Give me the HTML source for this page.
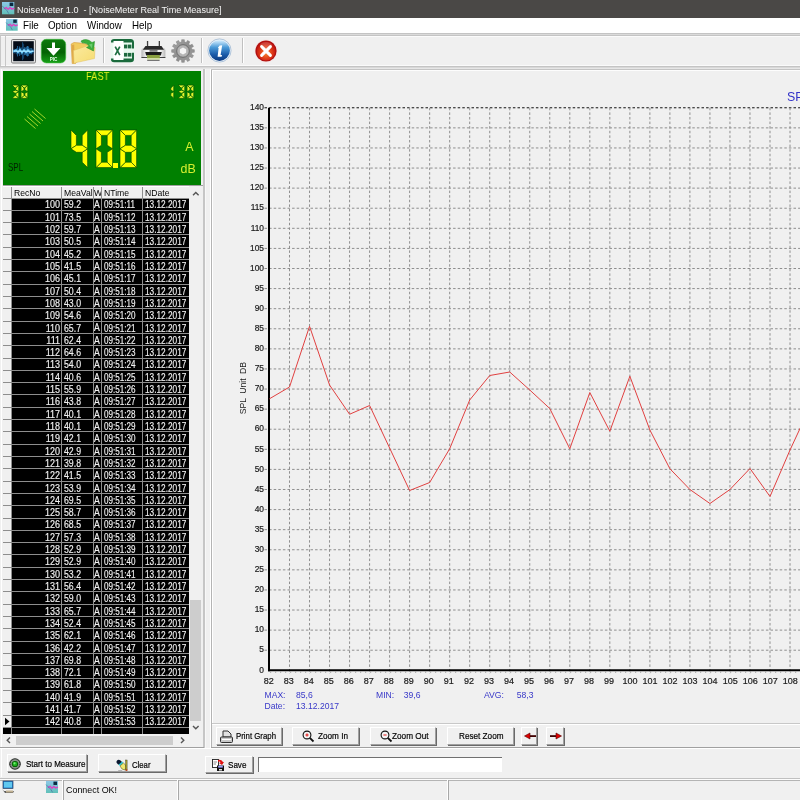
<!DOCTYPE html>
<html><head><meta charset="utf-8">
<style>
*{margin:0;padding:0;box-sizing:border-box}
html,body{width:800px;height:800px;overflow:hidden;background:#f0f0f0;font-family:"Liberation Sans", sans-serif}
.a{position:absolute}
.t{position:absolute;white-space:nowrap;line-height:1}
</style></head><body><div style="position:absolute;left:0;top:0;width:800px;height:800px;will-change:transform">

<div class="a" style="left:0;top:0;width:800px;height:17.5px;background:#4a4846"></div>
<div class="t" style="left:17.3px;top:5px;font-size:9.6px;color:#f6f6f6;transform:scaleX(0.945);transform-origin:0 0">NoiseMeter 1.0&nbsp; - [NoiseMeter Real Time Measure]</div>
<div class="a" style="left:0;top:17.5px;width:800px;height:15.5px;background:#ffffff"></div>
<div class="t" style="left:22.9px;top:21.3px;font-size:10.2px;color:#000;transform:scaleX(0.96);transform-origin:0 0">File</div>
<div class="t" style="left:48px;top:21.3px;font-size:10.2px;color:#000;transform:scaleX(0.96);transform-origin:0 0">Option</div>
<div class="t" style="left:86.6px;top:21.3px;font-size:10.2px;color:#000;transform:scaleX(0.96);transform-origin:0 0">Window</div>
<div class="t" style="left:131.6px;top:21.3px;font-size:10.2px;color:#000;transform:scaleX(0.96);transform-origin:0 0">Help</div>
<div class="a" style="left:0;top:33px;width:800px;height:1px;background:#c4c4c4"></div>
<div class="a" style="left:0;top:34px;width:800px;height:1px;background:#dadada"></div>
<div class="a" style="left:0;top:35px;width:800px;height:1px;background:#c4c4c4"></div>
<div class="a" style="left:0;top:36px;width:800px;height:1px;background:#fbfbfb"></div>
<div class="a" style="left:0;top:65px;width:800px;height:1px;background:#fafafa"></div>
<div class="a" style="left:0;top:66px;width:800px;height:1px;background:#c4c4c4"></div>
<div class="a" style="left:0;top:67px;width:800px;height:1px;background:#d8d8d8"></div>
<div class="a" style="left:0;top:68px;width:800px;height:1px;background:#e6e6e6"></div>
<div class="a" style="left:103.0px;top:38px;width:1px;height:25px;background:#c0c0c0"></div>
<div class="a" style="left:104.0px;top:38px;width:1px;height:25px;background:#ffffff"></div>
<div class="a" style="left:201.0px;top:38px;width:1px;height:25px;background:#c0c0c0"></div>
<div class="a" style="left:202.0px;top:38px;width:1px;height:25px;background:#ffffff"></div>
<div class="a" style="left:242.0px;top:38px;width:1px;height:25px;background:#c0c0c0"></div>
<div class="a" style="left:243.0px;top:38px;width:1px;height:25px;background:#ffffff"></div>
<div class="a" style="left:0;top:36px;width:1px;height:30px;background:#c8c8c8"></div>
<div class="a" style="left:5px;top:36px;width:1px;height:30px;background:#c8c8c8"></div>
<div class="a" style="left:1px;top:69px;width:1px;height:708px;background:#ffffff"></div>
<div class="a" style="left:3px;top:70.8px;width:198px;height:113.8px;background:#008000"></div>
<div class="t" style="left:85.6px;top:71px;font-size:11px;color:#e0f020;transform:scaleX(0.85);transform-origin:0 0">FAST</div>
<div class="t" style="left:8.3px;top:161.6px;font-size:10.8px;color:#002000;transform:scaleX(0.74);transform-origin:0 0">SPL</div>
<div class="t" style="left:185.3px;top:140.8px;font-size:12.4px;color:#d8f030">A</div>
<div class="t" style="left:180.6px;top:163.2px;font-size:12.4px;color:#d8f030">dB</div>
<svg class="a" style="left:70.8px;top:130px;overflow:visible" width="16.6" height="37.6"><polygon points="16.60,0.00 16.60,18.80 11.20,15.30 11.20,5.40" fill="#ffff00" stroke="#004800" stroke-width="0.6" stroke-linejoin="miter"/><polygon points="16.60,18.80 16.60,37.60 11.20,32.20 11.20,22.30" fill="#ffff00" stroke="#004800" stroke-width="0.6" stroke-linejoin="miter"/><polygon points="0.00,0.00 5.40,5.40 5.40,15.30 0.00,18.80" fill="#ffff00" stroke="#004800" stroke-width="0.6" stroke-linejoin="miter"/><polygon points="0.00,18.80 5.40,15.30 11.20,15.30 16.60,18.80 11.20,22.30 5.40,22.30" fill="#ffff00" stroke="#004800" stroke-width="0.6" stroke-linejoin="miter"/></svg>
<svg class="a" style="left:95.8px;top:130px;overflow:visible" width="16.6" height="37.6"><polygon points="0.00,0.00 16.60,0.00 11.20,5.40 5.40,5.40" fill="#ffff00" stroke="#004800" stroke-width="0.6" stroke-linejoin="miter"/><polygon points="16.60,0.00 16.60,18.80 11.20,15.30 11.20,5.40" fill="#ffff00" stroke="#004800" stroke-width="0.6" stroke-linejoin="miter"/><polygon points="16.60,18.80 16.60,37.60 11.20,32.20 11.20,22.30" fill="#ffff00" stroke="#004800" stroke-width="0.6" stroke-linejoin="miter"/><polygon points="0.00,37.60 5.40,32.20 11.20,32.20 16.60,37.60" fill="#ffff00" stroke="#004800" stroke-width="0.6" stroke-linejoin="miter"/><polygon points="0.00,18.80 5.40,22.30 5.40,32.20 0.00,37.60" fill="#ffff00" stroke="#004800" stroke-width="0.6" stroke-linejoin="miter"/><polygon points="0.00,0.00 5.40,5.40 5.40,15.30 0.00,18.80" fill="#ffff00" stroke="#004800" stroke-width="0.6" stroke-linejoin="miter"/></svg>
<div class="a" style="left:113px;top:163px;width:5px;height:5px;background:#ffff00"></div>
<svg class="a" style="left:120.4px;top:130px;overflow:visible" width="16.6" height="37.6"><polygon points="0.00,0.00 16.60,0.00 11.20,5.40 5.40,5.40" fill="#ffff00" stroke="#004800" stroke-width="0.6" stroke-linejoin="miter"/><polygon points="16.60,0.00 16.60,18.80 11.20,15.30 11.20,5.40" fill="#ffff00" stroke="#004800" stroke-width="0.6" stroke-linejoin="miter"/><polygon points="16.60,18.80 16.60,37.60 11.20,32.20 11.20,22.30" fill="#ffff00" stroke="#004800" stroke-width="0.6" stroke-linejoin="miter"/><polygon points="0.00,37.60 5.40,32.20 11.20,32.20 16.60,37.60" fill="#ffff00" stroke="#004800" stroke-width="0.6" stroke-linejoin="miter"/><polygon points="0.00,18.80 5.40,22.30 5.40,32.20 0.00,37.60" fill="#ffff00" stroke="#004800" stroke-width="0.6" stroke-linejoin="miter"/><polygon points="0.00,0.00 5.40,5.40 5.40,15.30 0.00,18.80" fill="#ffff00" stroke="#004800" stroke-width="0.6" stroke-linejoin="miter"/><polygon points="0.00,18.80 5.40,15.30 11.20,15.30 16.60,18.80 11.20,22.30 5.40,22.30" fill="#ffff00" stroke="#004800" stroke-width="0.6" stroke-linejoin="miter"/></svg>
<svg class="a" style="left:11.6px;top:84.7px;overflow:visible" width="6.8" height="13.4"><polygon points="0.00,0.00 6.80,0.00 3.80,3.00 3.00,3.00" fill="#e4f430" stroke="#006000" stroke-width="0.8" stroke-linejoin="miter"/><polygon points="6.80,0.00 6.80,6.70 3.80,5.20 3.80,3.00" fill="#e4f430" stroke="#006000" stroke-width="0.8" stroke-linejoin="miter"/><polygon points="6.80,6.70 6.80,13.40 3.80,10.40 3.80,8.20" fill="#e4f430" stroke="#006000" stroke-width="0.8" stroke-linejoin="miter"/><polygon points="0.00,13.40 3.00,10.40 3.80,10.40 6.80,13.40" fill="#e4f430" stroke="#006000" stroke-width="0.8" stroke-linejoin="miter"/><polygon points="0.00,6.70 3.00,5.20 3.80,5.20 6.80,6.70 3.80,8.20 3.00,8.20" fill="#e4f430" stroke="#006000" stroke-width="0.8" stroke-linejoin="miter"/></svg>
<svg class="a" style="left:21.2px;top:84.7px;overflow:visible" width="6.8" height="13.4"><polygon points="0.00,0.00 6.80,0.00 3.80,3.00 3.00,3.00" fill="#e4f430" stroke="#006000" stroke-width="0.8" stroke-linejoin="miter"/><polygon points="6.80,0.00 6.80,6.70 3.80,5.20 3.80,3.00" fill="#e4f430" stroke="#006000" stroke-width="0.8" stroke-linejoin="miter"/><polygon points="6.80,6.70 6.80,13.40 3.80,10.40 3.80,8.20" fill="#e4f430" stroke="#006000" stroke-width="0.8" stroke-linejoin="miter"/><polygon points="0.00,13.40 3.00,10.40 3.80,10.40 6.80,13.40" fill="#e4f430" stroke="#006000" stroke-width="0.8" stroke-linejoin="miter"/><polygon points="0.00,6.70 3.00,8.20 3.00,10.40 0.00,13.40" fill="#e4f430" stroke="#006000" stroke-width="0.8" stroke-linejoin="miter"/><polygon points="0.00,0.00 3.00,3.00 3.00,5.20 0.00,6.70" fill="#e4f430" stroke="#006000" stroke-width="0.8" stroke-linejoin="miter"/></svg>
<svg class="a" style="left:167.2px;top:84.7px;overflow:visible" width="6.8" height="13.4"><polygon points="6.80,0.00 6.80,6.70 3.80,5.20 3.80,3.00" fill="#e4f430" stroke="#006000" stroke-width="0.8" stroke-linejoin="miter"/><polygon points="6.80,6.70 6.80,13.40 3.80,10.40 3.80,8.20" fill="#e4f430" stroke="#006000" stroke-width="0.8" stroke-linejoin="miter"/></svg>
<svg class="a" style="left:177.6px;top:84.7px;overflow:visible" width="6.8" height="13.4"><polygon points="0.00,0.00 6.80,0.00 3.80,3.00 3.00,3.00" fill="#e4f430" stroke="#006000" stroke-width="0.8" stroke-linejoin="miter"/><polygon points="6.80,0.00 6.80,6.70 3.80,5.20 3.80,3.00" fill="#e4f430" stroke="#006000" stroke-width="0.8" stroke-linejoin="miter"/><polygon points="6.80,6.70 6.80,13.40 3.80,10.40 3.80,8.20" fill="#e4f430" stroke="#006000" stroke-width="0.8" stroke-linejoin="miter"/><polygon points="0.00,13.40 3.00,10.40 3.80,10.40 6.80,13.40" fill="#e4f430" stroke="#006000" stroke-width="0.8" stroke-linejoin="miter"/><polygon points="0.00,6.70 3.00,5.20 3.80,5.20 6.80,6.70 3.80,8.20 3.00,8.20" fill="#e4f430" stroke="#006000" stroke-width="0.8" stroke-linejoin="miter"/></svg>
<svg class="a" style="left:186.8px;top:84.7px;overflow:visible" width="6.8" height="13.4"><polygon points="0.00,0.00 6.80,0.00 3.80,3.00 3.00,3.00" fill="#e4f430" stroke="#006000" stroke-width="0.8" stroke-linejoin="miter"/><polygon points="6.80,0.00 6.80,6.70 3.80,5.20 3.80,3.00" fill="#e4f430" stroke="#006000" stroke-width="0.8" stroke-linejoin="miter"/><polygon points="6.80,6.70 6.80,13.40 3.80,10.40 3.80,8.20" fill="#e4f430" stroke="#006000" stroke-width="0.8" stroke-linejoin="miter"/><polygon points="0.00,13.40 3.00,10.40 3.80,10.40 6.80,13.40" fill="#e4f430" stroke="#006000" stroke-width="0.8" stroke-linejoin="miter"/><polygon points="0.00,6.70 3.00,8.20 3.00,10.40 0.00,13.40" fill="#e4f430" stroke="#006000" stroke-width="0.8" stroke-linejoin="miter"/><polygon points="0.00,0.00 3.00,3.00 3.00,5.20 0.00,6.70" fill="#e4f430" stroke="#006000" stroke-width="0.8" stroke-linejoin="miter"/></svg>
<svg class="a" style="left:0;top:0" width="60" height="140"><line x1="24.50" y1="119.00" x2="35.50" y2="128.50" stroke="#b8e030" stroke-width="0.9"/><line x1="27.00" y1="116.50" x2="38.00" y2="126.00" stroke="#b8e030" stroke-width="0.9"/><line x1="29.50" y1="114.00" x2="40.50" y2="123.50" stroke="#b8e030" stroke-width="0.9"/><line x1="32.00" y1="111.50" x2="43.00" y2="121.00" stroke="#b8e030" stroke-width="0.9"/><line x1="34.50" y1="109.00" x2="45.50" y2="118.50" stroke="#b8e030" stroke-width="0.9"/></svg>
<div class="a" style="left:3px;top:198px;width:200px;height:548px;background:#000"></div>
<div class="a" style="left:3px;top:184.6px;width:200px;height:1px;background:#a0a0a0"></div>
<div class="a" style="left:3px;top:185.5px;width:186px;height:12.5px;background:#f0f0f0"></div>
<div class="a" style="left:3px;top:198px;width:8.8px;height:530px;background:#f0f0f0"></div>
<div class="a" style="left:189px;top:185.5px;width:14px;height:548.5px;background:#f0f0f0"></div>
<div class="a" style="left:190px;top:600px;width:11px;height:120.5px;background:#cdcdcd"></div>
<div class="a" style="left:3px;top:734px;width:200px;height:12.3px;background:#f0f0f0"></div>
<div class="a" style="left:16px;top:735.5px;width:156.5px;height:9.5px;background:#cdcdcd"></div>
<svg class="a" style="left:0;top:0" width="205" height="750"><g fill="none" stroke="#555" stroke-width="1.4"><polyline points="193,195.2 195.8,192.4 198.6,195.2"/><polyline points="193,726 195.8,728.8 198.6,726"/><polyline points="10,737.5 7.2,740.3 10,743.1"/><polyline points="181,737.5 183.8,740.3 181,743.1"/></g></svg>
<div class="t" style="left:13.5px;top:188.2px;font-size:9.6px;color:#000;transform:scaleX(0.9);transform-origin:0 0">RecNo</div>
<div class="t" style="left:63.5px;top:188.2px;font-size:9.6px;color:#000;transform:scaleX(0.9);transform-origin:0 0">MeaVal</div>
<div class="a" style="left:93.5px;top:186px;width:8px;height:12px;overflow:hidden"><div class="t" style="left:0;top:2.2px;font-size:9.6px;color:#000;transform:scaleX(0.9);transform-origin:0 0">W</div></div>
<div class="t" style="left:103.5px;top:188.2px;font-size:9.6px;color:#000;transform:scaleX(0.9);transform-origin:0 0">NTime</div>
<div class="t" style="left:144.5px;top:188.2px;font-size:9.6px;color:#000;transform:scaleX(0.9);transform-origin:0 0">NDate</div>
<div class="t" style="left:37.5px;width:22px;text-align:right;top:200.40px;font-size:10px;color:#f2f2f2;-webkit-text-stroke:0.15px #f2f2f2;transform:scaleX(0.9);transform-origin:100% 0">100</div><div class="t" style="left:63.8px;top:200.40px;font-size:10px;color:#f2f2f2;-webkit-text-stroke:0.15px #f2f2f2;transform:scaleX(0.874);transform-origin:0 0">59.2</div><div class="a" style="left:93.6px;top:198.30px;width:7.6px;height:12px;overflow:hidden"><div class="t" style="left:0.6px;top:2.1px;font-size:10px;color:#f2f2f2;-webkit-text-stroke:0.15px #f2f2f2;transform:scaleX(0.87);transform-origin:0 0">A</div></div><div class="t" style="left:103.6px;top:200.40px;font-size:10px;color:#f2f2f2;-webkit-text-stroke:0.15px #f2f2f2;transform:scaleX(0.81);transform-origin:0 0">09:51:11</div><div class="t" style="left:144.8px;top:200.40px;font-size:10px;color:#f2f2f2;-webkit-text-stroke:0.15px #f2f2f2;transform:scaleX(0.826);transform-origin:0 0">13.12.2017</div><div class="a" style="left:3px;top:210px;width:186px;height:1px;background:#8e8e8e"></div><div class="t" style="left:37.5px;width:22px;text-align:right;top:212.71px;font-size:10px;color:#f2f2f2;-webkit-text-stroke:0.15px #f2f2f2;transform:scaleX(0.9);transform-origin:100% 0">101</div><div class="t" style="left:63.8px;top:212.71px;font-size:10px;color:#f2f2f2;-webkit-text-stroke:0.15px #f2f2f2;transform:scaleX(0.874);transform-origin:0 0">73.5</div><div class="a" style="left:93.6px;top:210.61px;width:7.6px;height:12px;overflow:hidden"><div class="t" style="left:0.6px;top:2.1px;font-size:10px;color:#f2f2f2;-webkit-text-stroke:0.15px #f2f2f2;transform:scaleX(0.87);transform-origin:0 0">A</div></div><div class="t" style="left:103.6px;top:212.71px;font-size:10px;color:#f2f2f2;-webkit-text-stroke:0.15px #f2f2f2;transform:scaleX(0.81);transform-origin:0 0">09:51:12</div><div class="t" style="left:144.8px;top:212.71px;font-size:10px;color:#f2f2f2;-webkit-text-stroke:0.15px #f2f2f2;transform:scaleX(0.826);transform-origin:0 0">13.12.2017</div><div class="a" style="left:3px;top:222px;width:186px;height:1px;background:#8e8e8e"></div><div class="t" style="left:37.5px;width:22px;text-align:right;top:225.02px;font-size:10px;color:#f2f2f2;-webkit-text-stroke:0.15px #f2f2f2;transform:scaleX(0.9);transform-origin:100% 0">102</div><div class="t" style="left:63.8px;top:225.02px;font-size:10px;color:#f2f2f2;-webkit-text-stroke:0.15px #f2f2f2;transform:scaleX(0.874);transform-origin:0 0">59.7</div><div class="a" style="left:93.6px;top:222.92px;width:7.6px;height:12px;overflow:hidden"><div class="t" style="left:0.6px;top:2.1px;font-size:10px;color:#f2f2f2;-webkit-text-stroke:0.15px #f2f2f2;transform:scaleX(0.87);transform-origin:0 0">A</div></div><div class="t" style="left:103.6px;top:225.02px;font-size:10px;color:#f2f2f2;-webkit-text-stroke:0.15px #f2f2f2;transform:scaleX(0.81);transform-origin:0 0">09:51:13</div><div class="t" style="left:144.8px;top:225.02px;font-size:10px;color:#f2f2f2;-webkit-text-stroke:0.15px #f2f2f2;transform:scaleX(0.826);transform-origin:0 0">13.12.2017</div><div class="a" style="left:3px;top:234px;width:186px;height:1px;background:#8e8e8e"></div><div class="t" style="left:37.5px;width:22px;text-align:right;top:237.33px;font-size:10px;color:#f2f2f2;-webkit-text-stroke:0.15px #f2f2f2;transform:scaleX(0.9);transform-origin:100% 0">103</div><div class="t" style="left:63.8px;top:237.33px;font-size:10px;color:#f2f2f2;-webkit-text-stroke:0.15px #f2f2f2;transform:scaleX(0.874);transform-origin:0 0">50.5</div><div class="a" style="left:93.6px;top:235.23px;width:7.6px;height:12px;overflow:hidden"><div class="t" style="left:0.6px;top:2.1px;font-size:10px;color:#f2f2f2;-webkit-text-stroke:0.15px #f2f2f2;transform:scaleX(0.87);transform-origin:0 0">A</div></div><div class="t" style="left:103.6px;top:237.33px;font-size:10px;color:#f2f2f2;-webkit-text-stroke:0.15px #f2f2f2;transform:scaleX(0.81);transform-origin:0 0">09:51:14</div><div class="t" style="left:144.8px;top:237.33px;font-size:10px;color:#f2f2f2;-webkit-text-stroke:0.15px #f2f2f2;transform:scaleX(0.826);transform-origin:0 0">13.12.2017</div><div class="a" style="left:3px;top:247px;width:186px;height:1px;background:#8e8e8e"></div><div class="t" style="left:37.5px;width:22px;text-align:right;top:249.64px;font-size:10px;color:#f2f2f2;-webkit-text-stroke:0.15px #f2f2f2;transform:scaleX(0.9);transform-origin:100% 0">104</div><div class="t" style="left:63.8px;top:249.64px;font-size:10px;color:#f2f2f2;-webkit-text-stroke:0.15px #f2f2f2;transform:scaleX(0.874);transform-origin:0 0">45.2</div><div class="a" style="left:93.6px;top:247.54px;width:7.6px;height:12px;overflow:hidden"><div class="t" style="left:0.6px;top:2.1px;font-size:10px;color:#f2f2f2;-webkit-text-stroke:0.15px #f2f2f2;transform:scaleX(0.87);transform-origin:0 0">A</div></div><div class="t" style="left:103.6px;top:249.64px;font-size:10px;color:#f2f2f2;-webkit-text-stroke:0.15px #f2f2f2;transform:scaleX(0.81);transform-origin:0 0">09:51:15</div><div class="t" style="left:144.8px;top:249.64px;font-size:10px;color:#f2f2f2;-webkit-text-stroke:0.15px #f2f2f2;transform:scaleX(0.826);transform-origin:0 0">13.12.2017</div><div class="a" style="left:3px;top:259px;width:186px;height:1px;background:#8e8e8e"></div><div class="t" style="left:37.5px;width:22px;text-align:right;top:261.95px;font-size:10px;color:#f2f2f2;-webkit-text-stroke:0.15px #f2f2f2;transform:scaleX(0.9);transform-origin:100% 0">105</div><div class="t" style="left:63.8px;top:261.95px;font-size:10px;color:#f2f2f2;-webkit-text-stroke:0.15px #f2f2f2;transform:scaleX(0.874);transform-origin:0 0">41.5</div><div class="a" style="left:93.6px;top:259.85px;width:7.6px;height:12px;overflow:hidden"><div class="t" style="left:0.6px;top:2.1px;font-size:10px;color:#f2f2f2;-webkit-text-stroke:0.15px #f2f2f2;transform:scaleX(0.87);transform-origin:0 0">A</div></div><div class="t" style="left:103.6px;top:261.95px;font-size:10px;color:#f2f2f2;-webkit-text-stroke:0.15px #f2f2f2;transform:scaleX(0.81);transform-origin:0 0">09:51:16</div><div class="t" style="left:144.8px;top:261.95px;font-size:10px;color:#f2f2f2;-webkit-text-stroke:0.15px #f2f2f2;transform:scaleX(0.826);transform-origin:0 0">13.12.2017</div><div class="a" style="left:3px;top:271px;width:186px;height:1px;background:#8e8e8e"></div><div class="t" style="left:37.5px;width:22px;text-align:right;top:274.26px;font-size:10px;color:#f2f2f2;-webkit-text-stroke:0.15px #f2f2f2;transform:scaleX(0.9);transform-origin:100% 0">106</div><div class="t" style="left:63.8px;top:274.26px;font-size:10px;color:#f2f2f2;-webkit-text-stroke:0.15px #f2f2f2;transform:scaleX(0.874);transform-origin:0 0">45.1</div><div class="a" style="left:93.6px;top:272.16px;width:7.6px;height:12px;overflow:hidden"><div class="t" style="left:0.6px;top:2.1px;font-size:10px;color:#f2f2f2;-webkit-text-stroke:0.15px #f2f2f2;transform:scaleX(0.87);transform-origin:0 0">A</div></div><div class="t" style="left:103.6px;top:274.26px;font-size:10px;color:#f2f2f2;-webkit-text-stroke:0.15px #f2f2f2;transform:scaleX(0.81);transform-origin:0 0">09:51:17</div><div class="t" style="left:144.8px;top:274.26px;font-size:10px;color:#f2f2f2;-webkit-text-stroke:0.15px #f2f2f2;transform:scaleX(0.826);transform-origin:0 0">13.12.2017</div><div class="a" style="left:3px;top:284px;width:186px;height:1px;background:#8e8e8e"></div><div class="t" style="left:37.5px;width:22px;text-align:right;top:286.57px;font-size:10px;color:#f2f2f2;-webkit-text-stroke:0.15px #f2f2f2;transform:scaleX(0.9);transform-origin:100% 0">107</div><div class="t" style="left:63.8px;top:286.57px;font-size:10px;color:#f2f2f2;-webkit-text-stroke:0.15px #f2f2f2;transform:scaleX(0.874);transform-origin:0 0">50.4</div><div class="a" style="left:93.6px;top:284.47px;width:7.6px;height:12px;overflow:hidden"><div class="t" style="left:0.6px;top:2.1px;font-size:10px;color:#f2f2f2;-webkit-text-stroke:0.15px #f2f2f2;transform:scaleX(0.87);transform-origin:0 0">A</div></div><div class="t" style="left:103.6px;top:286.57px;font-size:10px;color:#f2f2f2;-webkit-text-stroke:0.15px #f2f2f2;transform:scaleX(0.81);transform-origin:0 0">09:51:18</div><div class="t" style="left:144.8px;top:286.57px;font-size:10px;color:#f2f2f2;-webkit-text-stroke:0.15px #f2f2f2;transform:scaleX(0.826);transform-origin:0 0">13.12.2017</div><div class="a" style="left:3px;top:296px;width:186px;height:1px;background:#8e8e8e"></div><div class="t" style="left:37.5px;width:22px;text-align:right;top:298.88px;font-size:10px;color:#f2f2f2;-webkit-text-stroke:0.15px #f2f2f2;transform:scaleX(0.9);transform-origin:100% 0">108</div><div class="t" style="left:63.8px;top:298.88px;font-size:10px;color:#f2f2f2;-webkit-text-stroke:0.15px #f2f2f2;transform:scaleX(0.874);transform-origin:0 0">43.0</div><div class="a" style="left:93.6px;top:296.78px;width:7.6px;height:12px;overflow:hidden"><div class="t" style="left:0.6px;top:2.1px;font-size:10px;color:#f2f2f2;-webkit-text-stroke:0.15px #f2f2f2;transform:scaleX(0.87);transform-origin:0 0">A</div></div><div class="t" style="left:103.6px;top:298.88px;font-size:10px;color:#f2f2f2;-webkit-text-stroke:0.15px #f2f2f2;transform:scaleX(0.81);transform-origin:0 0">09:51:19</div><div class="t" style="left:144.8px;top:298.88px;font-size:10px;color:#f2f2f2;-webkit-text-stroke:0.15px #f2f2f2;transform:scaleX(0.826);transform-origin:0 0">13.12.2017</div><div class="a" style="left:3px;top:308px;width:186px;height:1px;background:#8e8e8e"></div><div class="t" style="left:37.5px;width:22px;text-align:right;top:311.19px;font-size:10px;color:#f2f2f2;-webkit-text-stroke:0.15px #f2f2f2;transform:scaleX(0.9);transform-origin:100% 0">109</div><div class="t" style="left:63.8px;top:311.19px;font-size:10px;color:#f2f2f2;-webkit-text-stroke:0.15px #f2f2f2;transform:scaleX(0.874);transform-origin:0 0">54.6</div><div class="a" style="left:93.6px;top:309.09px;width:7.6px;height:12px;overflow:hidden"><div class="t" style="left:0.6px;top:2.1px;font-size:10px;color:#f2f2f2;-webkit-text-stroke:0.15px #f2f2f2;transform:scaleX(0.87);transform-origin:0 0">A</div></div><div class="t" style="left:103.6px;top:311.19px;font-size:10px;color:#f2f2f2;-webkit-text-stroke:0.15px #f2f2f2;transform:scaleX(0.81);transform-origin:0 0">09:51:20</div><div class="t" style="left:144.8px;top:311.19px;font-size:10px;color:#f2f2f2;-webkit-text-stroke:0.15px #f2f2f2;transform:scaleX(0.826);transform-origin:0 0">13.12.2017</div><div class="a" style="left:3px;top:321px;width:186px;height:1px;background:#8e8e8e"></div><div class="t" style="left:37.5px;width:22px;text-align:right;top:323.50px;font-size:10px;color:#f2f2f2;-webkit-text-stroke:0.15px #f2f2f2;transform:scaleX(0.9);transform-origin:100% 0">110</div><div class="t" style="left:63.8px;top:323.50px;font-size:10px;color:#f2f2f2;-webkit-text-stroke:0.15px #f2f2f2;transform:scaleX(0.874);transform-origin:0 0">65.7</div><div class="a" style="left:93.6px;top:321.40px;width:7.6px;height:12px;overflow:hidden"><div class="t" style="left:0.6px;top:2.1px;font-size:10px;color:#f2f2f2;-webkit-text-stroke:0.15px #f2f2f2;transform:scaleX(0.87);transform-origin:0 0">A</div></div><div class="t" style="left:103.6px;top:323.50px;font-size:10px;color:#f2f2f2;-webkit-text-stroke:0.15px #f2f2f2;transform:scaleX(0.81);transform-origin:0 0">09:51:21</div><div class="t" style="left:144.8px;top:323.50px;font-size:10px;color:#f2f2f2;-webkit-text-stroke:0.15px #f2f2f2;transform:scaleX(0.826);transform-origin:0 0">13.12.2017</div><div class="a" style="left:3px;top:333px;width:186px;height:1px;background:#8e8e8e"></div><div class="t" style="left:37.5px;width:22px;text-align:right;top:335.81px;font-size:10px;color:#f2f2f2;-webkit-text-stroke:0.15px #f2f2f2;transform:scaleX(0.9);transform-origin:100% 0">111</div><div class="t" style="left:63.8px;top:335.81px;font-size:10px;color:#f2f2f2;-webkit-text-stroke:0.15px #f2f2f2;transform:scaleX(0.874);transform-origin:0 0">62.4</div><div class="a" style="left:93.6px;top:333.71px;width:7.6px;height:12px;overflow:hidden"><div class="t" style="left:0.6px;top:2.1px;font-size:10px;color:#f2f2f2;-webkit-text-stroke:0.15px #f2f2f2;transform:scaleX(0.87);transform-origin:0 0">A</div></div><div class="t" style="left:103.6px;top:335.81px;font-size:10px;color:#f2f2f2;-webkit-text-stroke:0.15px #f2f2f2;transform:scaleX(0.81);transform-origin:0 0">09:51:22</div><div class="t" style="left:144.8px;top:335.81px;font-size:10px;color:#f2f2f2;-webkit-text-stroke:0.15px #f2f2f2;transform:scaleX(0.826);transform-origin:0 0">13.12.2017</div><div class="a" style="left:3px;top:345px;width:186px;height:1px;background:#8e8e8e"></div><div class="t" style="left:37.5px;width:22px;text-align:right;top:348.12px;font-size:10px;color:#f2f2f2;-webkit-text-stroke:0.15px #f2f2f2;transform:scaleX(0.9);transform-origin:100% 0">112</div><div class="t" style="left:63.8px;top:348.12px;font-size:10px;color:#f2f2f2;-webkit-text-stroke:0.15px #f2f2f2;transform:scaleX(0.874);transform-origin:0 0">64.6</div><div class="a" style="left:93.6px;top:346.02px;width:7.6px;height:12px;overflow:hidden"><div class="t" style="left:0.6px;top:2.1px;font-size:10px;color:#f2f2f2;-webkit-text-stroke:0.15px #f2f2f2;transform:scaleX(0.87);transform-origin:0 0">A</div></div><div class="t" style="left:103.6px;top:348.12px;font-size:10px;color:#f2f2f2;-webkit-text-stroke:0.15px #f2f2f2;transform:scaleX(0.81);transform-origin:0 0">09:51:23</div><div class="t" style="left:144.8px;top:348.12px;font-size:10px;color:#f2f2f2;-webkit-text-stroke:0.15px #f2f2f2;transform:scaleX(0.826);transform-origin:0 0">13.12.2017</div><div class="a" style="left:3px;top:358px;width:186px;height:1px;background:#8e8e8e"></div><div class="t" style="left:37.5px;width:22px;text-align:right;top:360.43px;font-size:10px;color:#f2f2f2;-webkit-text-stroke:0.15px #f2f2f2;transform:scaleX(0.9);transform-origin:100% 0">113</div><div class="t" style="left:63.8px;top:360.43px;font-size:10px;color:#f2f2f2;-webkit-text-stroke:0.15px #f2f2f2;transform:scaleX(0.874);transform-origin:0 0">54.0</div><div class="a" style="left:93.6px;top:358.33px;width:7.6px;height:12px;overflow:hidden"><div class="t" style="left:0.6px;top:2.1px;font-size:10px;color:#f2f2f2;-webkit-text-stroke:0.15px #f2f2f2;transform:scaleX(0.87);transform-origin:0 0">A</div></div><div class="t" style="left:103.6px;top:360.43px;font-size:10px;color:#f2f2f2;-webkit-text-stroke:0.15px #f2f2f2;transform:scaleX(0.81);transform-origin:0 0">09:51:24</div><div class="t" style="left:144.8px;top:360.43px;font-size:10px;color:#f2f2f2;-webkit-text-stroke:0.15px #f2f2f2;transform:scaleX(0.826);transform-origin:0 0">13.12.2017</div><div class="a" style="left:3px;top:370px;width:186px;height:1px;background:#8e8e8e"></div><div class="t" style="left:37.5px;width:22px;text-align:right;top:372.74px;font-size:10px;color:#f2f2f2;-webkit-text-stroke:0.15px #f2f2f2;transform:scaleX(0.9);transform-origin:100% 0">114</div><div class="t" style="left:63.8px;top:372.74px;font-size:10px;color:#f2f2f2;-webkit-text-stroke:0.15px #f2f2f2;transform:scaleX(0.874);transform-origin:0 0">40.6</div><div class="a" style="left:93.6px;top:370.64px;width:7.6px;height:12px;overflow:hidden"><div class="t" style="left:0.6px;top:2.1px;font-size:10px;color:#f2f2f2;-webkit-text-stroke:0.15px #f2f2f2;transform:scaleX(0.87);transform-origin:0 0">A</div></div><div class="t" style="left:103.6px;top:372.74px;font-size:10px;color:#f2f2f2;-webkit-text-stroke:0.15px #f2f2f2;transform:scaleX(0.81);transform-origin:0 0">09:51:25</div><div class="t" style="left:144.8px;top:372.74px;font-size:10px;color:#f2f2f2;-webkit-text-stroke:0.15px #f2f2f2;transform:scaleX(0.826);transform-origin:0 0">13.12.2017</div><div class="a" style="left:3px;top:382px;width:186px;height:1px;background:#8e8e8e"></div><div class="t" style="left:37.5px;width:22px;text-align:right;top:385.05px;font-size:10px;color:#f2f2f2;-webkit-text-stroke:0.15px #f2f2f2;transform:scaleX(0.9);transform-origin:100% 0">115</div><div class="t" style="left:63.8px;top:385.05px;font-size:10px;color:#f2f2f2;-webkit-text-stroke:0.15px #f2f2f2;transform:scaleX(0.874);transform-origin:0 0">55.9</div><div class="a" style="left:93.6px;top:382.95px;width:7.6px;height:12px;overflow:hidden"><div class="t" style="left:0.6px;top:2.1px;font-size:10px;color:#f2f2f2;-webkit-text-stroke:0.15px #f2f2f2;transform:scaleX(0.87);transform-origin:0 0">A</div></div><div class="t" style="left:103.6px;top:385.05px;font-size:10px;color:#f2f2f2;-webkit-text-stroke:0.15px #f2f2f2;transform:scaleX(0.81);transform-origin:0 0">09:51:26</div><div class="t" style="left:144.8px;top:385.05px;font-size:10px;color:#f2f2f2;-webkit-text-stroke:0.15px #f2f2f2;transform:scaleX(0.826);transform-origin:0 0">13.12.2017</div><div class="a" style="left:3px;top:394px;width:186px;height:1px;background:#8e8e8e"></div><div class="t" style="left:37.5px;width:22px;text-align:right;top:397.36px;font-size:10px;color:#f2f2f2;-webkit-text-stroke:0.15px #f2f2f2;transform:scaleX(0.9);transform-origin:100% 0">116</div><div class="t" style="left:63.8px;top:397.36px;font-size:10px;color:#f2f2f2;-webkit-text-stroke:0.15px #f2f2f2;transform:scaleX(0.874);transform-origin:0 0">43.8</div><div class="a" style="left:93.6px;top:395.26px;width:7.6px;height:12px;overflow:hidden"><div class="t" style="left:0.6px;top:2.1px;font-size:10px;color:#f2f2f2;-webkit-text-stroke:0.15px #f2f2f2;transform:scaleX(0.87);transform-origin:0 0">A</div></div><div class="t" style="left:103.6px;top:397.36px;font-size:10px;color:#f2f2f2;-webkit-text-stroke:0.15px #f2f2f2;transform:scaleX(0.81);transform-origin:0 0">09:51:27</div><div class="t" style="left:144.8px;top:397.36px;font-size:10px;color:#f2f2f2;-webkit-text-stroke:0.15px #f2f2f2;transform:scaleX(0.826);transform-origin:0 0">13.12.2017</div><div class="a" style="left:3px;top:407px;width:186px;height:1px;background:#8e8e8e"></div><div class="t" style="left:37.5px;width:22px;text-align:right;top:409.67px;font-size:10px;color:#f2f2f2;-webkit-text-stroke:0.15px #f2f2f2;transform:scaleX(0.9);transform-origin:100% 0">117</div><div class="t" style="left:63.8px;top:409.67px;font-size:10px;color:#f2f2f2;-webkit-text-stroke:0.15px #f2f2f2;transform:scaleX(0.874);transform-origin:0 0">40.1</div><div class="a" style="left:93.6px;top:407.57px;width:7.6px;height:12px;overflow:hidden"><div class="t" style="left:0.6px;top:2.1px;font-size:10px;color:#f2f2f2;-webkit-text-stroke:0.15px #f2f2f2;transform:scaleX(0.87);transform-origin:0 0">A</div></div><div class="t" style="left:103.6px;top:409.67px;font-size:10px;color:#f2f2f2;-webkit-text-stroke:0.15px #f2f2f2;transform:scaleX(0.81);transform-origin:0 0">09:51:28</div><div class="t" style="left:144.8px;top:409.67px;font-size:10px;color:#f2f2f2;-webkit-text-stroke:0.15px #f2f2f2;transform:scaleX(0.826);transform-origin:0 0">13.12.2017</div><div class="a" style="left:3px;top:419px;width:186px;height:1px;background:#8e8e8e"></div><div class="t" style="left:37.5px;width:22px;text-align:right;top:421.98px;font-size:10px;color:#f2f2f2;-webkit-text-stroke:0.15px #f2f2f2;transform:scaleX(0.9);transform-origin:100% 0">118</div><div class="t" style="left:63.8px;top:421.98px;font-size:10px;color:#f2f2f2;-webkit-text-stroke:0.15px #f2f2f2;transform:scaleX(0.874);transform-origin:0 0">40.1</div><div class="a" style="left:93.6px;top:419.88px;width:7.6px;height:12px;overflow:hidden"><div class="t" style="left:0.6px;top:2.1px;font-size:10px;color:#f2f2f2;-webkit-text-stroke:0.15px #f2f2f2;transform:scaleX(0.87);transform-origin:0 0">A</div></div><div class="t" style="left:103.6px;top:421.98px;font-size:10px;color:#f2f2f2;-webkit-text-stroke:0.15px #f2f2f2;transform:scaleX(0.81);transform-origin:0 0">09:51:29</div><div class="t" style="left:144.8px;top:421.98px;font-size:10px;color:#f2f2f2;-webkit-text-stroke:0.15px #f2f2f2;transform:scaleX(0.826);transform-origin:0 0">13.12.2017</div><div class="a" style="left:3px;top:431px;width:186px;height:1px;background:#8e8e8e"></div><div class="t" style="left:37.5px;width:22px;text-align:right;top:434.29px;font-size:10px;color:#f2f2f2;-webkit-text-stroke:0.15px #f2f2f2;transform:scaleX(0.9);transform-origin:100% 0">119</div><div class="t" style="left:63.8px;top:434.29px;font-size:10px;color:#f2f2f2;-webkit-text-stroke:0.15px #f2f2f2;transform:scaleX(0.874);transform-origin:0 0">42.1</div><div class="a" style="left:93.6px;top:432.19px;width:7.6px;height:12px;overflow:hidden"><div class="t" style="left:0.6px;top:2.1px;font-size:10px;color:#f2f2f2;-webkit-text-stroke:0.15px #f2f2f2;transform:scaleX(0.87);transform-origin:0 0">A</div></div><div class="t" style="left:103.6px;top:434.29px;font-size:10px;color:#f2f2f2;-webkit-text-stroke:0.15px #f2f2f2;transform:scaleX(0.81);transform-origin:0 0">09:51:30</div><div class="t" style="left:144.8px;top:434.29px;font-size:10px;color:#f2f2f2;-webkit-text-stroke:0.15px #f2f2f2;transform:scaleX(0.826);transform-origin:0 0">13.12.2017</div><div class="a" style="left:3px;top:444px;width:186px;height:1px;background:#8e8e8e"></div><div class="t" style="left:37.5px;width:22px;text-align:right;top:446.60px;font-size:10px;color:#f2f2f2;-webkit-text-stroke:0.15px #f2f2f2;transform:scaleX(0.9);transform-origin:100% 0">120</div><div class="t" style="left:63.8px;top:446.60px;font-size:10px;color:#f2f2f2;-webkit-text-stroke:0.15px #f2f2f2;transform:scaleX(0.874);transform-origin:0 0">42.9</div><div class="a" style="left:93.6px;top:444.50px;width:7.6px;height:12px;overflow:hidden"><div class="t" style="left:0.6px;top:2.1px;font-size:10px;color:#f2f2f2;-webkit-text-stroke:0.15px #f2f2f2;transform:scaleX(0.87);transform-origin:0 0">A</div></div><div class="t" style="left:103.6px;top:446.60px;font-size:10px;color:#f2f2f2;-webkit-text-stroke:0.15px #f2f2f2;transform:scaleX(0.81);transform-origin:0 0">09:51:31</div><div class="t" style="left:144.8px;top:446.60px;font-size:10px;color:#f2f2f2;-webkit-text-stroke:0.15px #f2f2f2;transform:scaleX(0.826);transform-origin:0 0">13.12.2017</div><div class="a" style="left:3px;top:456px;width:186px;height:1px;background:#8e8e8e"></div><div class="t" style="left:37.5px;width:22px;text-align:right;top:458.91px;font-size:10px;color:#f2f2f2;-webkit-text-stroke:0.15px #f2f2f2;transform:scaleX(0.9);transform-origin:100% 0">121</div><div class="t" style="left:63.8px;top:458.91px;font-size:10px;color:#f2f2f2;-webkit-text-stroke:0.15px #f2f2f2;transform:scaleX(0.874);transform-origin:0 0">39.8</div><div class="a" style="left:93.6px;top:456.81px;width:7.6px;height:12px;overflow:hidden"><div class="t" style="left:0.6px;top:2.1px;font-size:10px;color:#f2f2f2;-webkit-text-stroke:0.15px #f2f2f2;transform:scaleX(0.87);transform-origin:0 0">A</div></div><div class="t" style="left:103.6px;top:458.91px;font-size:10px;color:#f2f2f2;-webkit-text-stroke:0.15px #f2f2f2;transform:scaleX(0.81);transform-origin:0 0">09:51:32</div><div class="t" style="left:144.8px;top:458.91px;font-size:10px;color:#f2f2f2;-webkit-text-stroke:0.15px #f2f2f2;transform:scaleX(0.826);transform-origin:0 0">13.12.2017</div><div class="a" style="left:3px;top:468px;width:186px;height:1px;background:#8e8e8e"></div><div class="t" style="left:37.5px;width:22px;text-align:right;top:471.22px;font-size:10px;color:#f2f2f2;-webkit-text-stroke:0.15px #f2f2f2;transform:scaleX(0.9);transform-origin:100% 0">122</div><div class="t" style="left:63.8px;top:471.22px;font-size:10px;color:#f2f2f2;-webkit-text-stroke:0.15px #f2f2f2;transform:scaleX(0.874);transform-origin:0 0">41.5</div><div class="a" style="left:93.6px;top:469.12px;width:7.6px;height:12px;overflow:hidden"><div class="t" style="left:0.6px;top:2.1px;font-size:10px;color:#f2f2f2;-webkit-text-stroke:0.15px #f2f2f2;transform:scaleX(0.87);transform-origin:0 0">A</div></div><div class="t" style="left:103.6px;top:471.22px;font-size:10px;color:#f2f2f2;-webkit-text-stroke:0.15px #f2f2f2;transform:scaleX(0.81);transform-origin:0 0">09:51:33</div><div class="t" style="left:144.8px;top:471.22px;font-size:10px;color:#f2f2f2;-webkit-text-stroke:0.15px #f2f2f2;transform:scaleX(0.826);transform-origin:0 0">13.12.2017</div><div class="a" style="left:3px;top:481px;width:186px;height:1px;background:#8e8e8e"></div><div class="t" style="left:37.5px;width:22px;text-align:right;top:483.53px;font-size:10px;color:#f2f2f2;-webkit-text-stroke:0.15px #f2f2f2;transform:scaleX(0.9);transform-origin:100% 0">123</div><div class="t" style="left:63.8px;top:483.53px;font-size:10px;color:#f2f2f2;-webkit-text-stroke:0.15px #f2f2f2;transform:scaleX(0.874);transform-origin:0 0">53.9</div><div class="a" style="left:93.6px;top:481.43px;width:7.6px;height:12px;overflow:hidden"><div class="t" style="left:0.6px;top:2.1px;font-size:10px;color:#f2f2f2;-webkit-text-stroke:0.15px #f2f2f2;transform:scaleX(0.87);transform-origin:0 0">A</div></div><div class="t" style="left:103.6px;top:483.53px;font-size:10px;color:#f2f2f2;-webkit-text-stroke:0.15px #f2f2f2;transform:scaleX(0.81);transform-origin:0 0">09:51:34</div><div class="t" style="left:144.8px;top:483.53px;font-size:10px;color:#f2f2f2;-webkit-text-stroke:0.15px #f2f2f2;transform:scaleX(0.826);transform-origin:0 0">13.12.2017</div><div class="a" style="left:3px;top:493px;width:186px;height:1px;background:#8e8e8e"></div><div class="t" style="left:37.5px;width:22px;text-align:right;top:495.84px;font-size:10px;color:#f2f2f2;-webkit-text-stroke:0.15px #f2f2f2;transform:scaleX(0.9);transform-origin:100% 0">124</div><div class="t" style="left:63.8px;top:495.84px;font-size:10px;color:#f2f2f2;-webkit-text-stroke:0.15px #f2f2f2;transform:scaleX(0.874);transform-origin:0 0">69.5</div><div class="a" style="left:93.6px;top:493.74px;width:7.6px;height:12px;overflow:hidden"><div class="t" style="left:0.6px;top:2.1px;font-size:10px;color:#f2f2f2;-webkit-text-stroke:0.15px #f2f2f2;transform:scaleX(0.87);transform-origin:0 0">A</div></div><div class="t" style="left:103.6px;top:495.84px;font-size:10px;color:#f2f2f2;-webkit-text-stroke:0.15px #f2f2f2;transform:scaleX(0.81);transform-origin:0 0">09:51:35</div><div class="t" style="left:144.8px;top:495.84px;font-size:10px;color:#f2f2f2;-webkit-text-stroke:0.15px #f2f2f2;transform:scaleX(0.826);transform-origin:0 0">13.12.2017</div><div class="a" style="left:3px;top:505px;width:186px;height:1px;background:#8e8e8e"></div><div class="t" style="left:37.5px;width:22px;text-align:right;top:508.15px;font-size:10px;color:#f2f2f2;-webkit-text-stroke:0.15px #f2f2f2;transform:scaleX(0.9);transform-origin:100% 0">125</div><div class="t" style="left:63.8px;top:508.15px;font-size:10px;color:#f2f2f2;-webkit-text-stroke:0.15px #f2f2f2;transform:scaleX(0.874);transform-origin:0 0">58.7</div><div class="a" style="left:93.6px;top:506.05px;width:7.6px;height:12px;overflow:hidden"><div class="t" style="left:0.6px;top:2.1px;font-size:10px;color:#f2f2f2;-webkit-text-stroke:0.15px #f2f2f2;transform:scaleX(0.87);transform-origin:0 0">A</div></div><div class="t" style="left:103.6px;top:508.15px;font-size:10px;color:#f2f2f2;-webkit-text-stroke:0.15px #f2f2f2;transform:scaleX(0.81);transform-origin:0 0">09:51:36</div><div class="t" style="left:144.8px;top:508.15px;font-size:10px;color:#f2f2f2;-webkit-text-stroke:0.15px #f2f2f2;transform:scaleX(0.826);transform-origin:0 0">13.12.2017</div><div class="a" style="left:3px;top:518px;width:186px;height:1px;background:#8e8e8e"></div><div class="t" style="left:37.5px;width:22px;text-align:right;top:520.46px;font-size:10px;color:#f2f2f2;-webkit-text-stroke:0.15px #f2f2f2;transform:scaleX(0.9);transform-origin:100% 0">126</div><div class="t" style="left:63.8px;top:520.46px;font-size:10px;color:#f2f2f2;-webkit-text-stroke:0.15px #f2f2f2;transform:scaleX(0.874);transform-origin:0 0">68.5</div><div class="a" style="left:93.6px;top:518.36px;width:7.6px;height:12px;overflow:hidden"><div class="t" style="left:0.6px;top:2.1px;font-size:10px;color:#f2f2f2;-webkit-text-stroke:0.15px #f2f2f2;transform:scaleX(0.87);transform-origin:0 0">A</div></div><div class="t" style="left:103.6px;top:520.46px;font-size:10px;color:#f2f2f2;-webkit-text-stroke:0.15px #f2f2f2;transform:scaleX(0.81);transform-origin:0 0">09:51:37</div><div class="t" style="left:144.8px;top:520.46px;font-size:10px;color:#f2f2f2;-webkit-text-stroke:0.15px #f2f2f2;transform:scaleX(0.826);transform-origin:0 0">13.12.2017</div><div class="a" style="left:3px;top:530px;width:186px;height:1px;background:#8e8e8e"></div><div class="t" style="left:37.5px;width:22px;text-align:right;top:532.77px;font-size:10px;color:#f2f2f2;-webkit-text-stroke:0.15px #f2f2f2;transform:scaleX(0.9);transform-origin:100% 0">127</div><div class="t" style="left:63.8px;top:532.77px;font-size:10px;color:#f2f2f2;-webkit-text-stroke:0.15px #f2f2f2;transform:scaleX(0.874);transform-origin:0 0">57.3</div><div class="a" style="left:93.6px;top:530.67px;width:7.6px;height:12px;overflow:hidden"><div class="t" style="left:0.6px;top:2.1px;font-size:10px;color:#f2f2f2;-webkit-text-stroke:0.15px #f2f2f2;transform:scaleX(0.87);transform-origin:0 0">A</div></div><div class="t" style="left:103.6px;top:532.77px;font-size:10px;color:#f2f2f2;-webkit-text-stroke:0.15px #f2f2f2;transform:scaleX(0.81);transform-origin:0 0">09:51:38</div><div class="t" style="left:144.8px;top:532.77px;font-size:10px;color:#f2f2f2;-webkit-text-stroke:0.15px #f2f2f2;transform:scaleX(0.826);transform-origin:0 0">13.12.2017</div><div class="a" style="left:3px;top:542px;width:186px;height:1px;background:#8e8e8e"></div><div class="t" style="left:37.5px;width:22px;text-align:right;top:545.08px;font-size:10px;color:#f2f2f2;-webkit-text-stroke:0.15px #f2f2f2;transform:scaleX(0.9);transform-origin:100% 0">128</div><div class="t" style="left:63.8px;top:545.08px;font-size:10px;color:#f2f2f2;-webkit-text-stroke:0.15px #f2f2f2;transform:scaleX(0.874);transform-origin:0 0">52.9</div><div class="a" style="left:93.6px;top:542.98px;width:7.6px;height:12px;overflow:hidden"><div class="t" style="left:0.6px;top:2.1px;font-size:10px;color:#f2f2f2;-webkit-text-stroke:0.15px #f2f2f2;transform:scaleX(0.87);transform-origin:0 0">A</div></div><div class="t" style="left:103.6px;top:545.08px;font-size:10px;color:#f2f2f2;-webkit-text-stroke:0.15px #f2f2f2;transform:scaleX(0.81);transform-origin:0 0">09:51:39</div><div class="t" style="left:144.8px;top:545.08px;font-size:10px;color:#f2f2f2;-webkit-text-stroke:0.15px #f2f2f2;transform:scaleX(0.826);transform-origin:0 0">13.12.2017</div><div class="a" style="left:3px;top:554px;width:186px;height:1px;background:#8e8e8e"></div><div class="t" style="left:37.5px;width:22px;text-align:right;top:557.39px;font-size:10px;color:#f2f2f2;-webkit-text-stroke:0.15px #f2f2f2;transform:scaleX(0.9);transform-origin:100% 0">129</div><div class="t" style="left:63.8px;top:557.39px;font-size:10px;color:#f2f2f2;-webkit-text-stroke:0.15px #f2f2f2;transform:scaleX(0.874);transform-origin:0 0">52.9</div><div class="a" style="left:93.6px;top:555.29px;width:7.6px;height:12px;overflow:hidden"><div class="t" style="left:0.6px;top:2.1px;font-size:10px;color:#f2f2f2;-webkit-text-stroke:0.15px #f2f2f2;transform:scaleX(0.87);transform-origin:0 0">A</div></div><div class="t" style="left:103.6px;top:557.39px;font-size:10px;color:#f2f2f2;-webkit-text-stroke:0.15px #f2f2f2;transform:scaleX(0.81);transform-origin:0 0">09:51:40</div><div class="t" style="left:144.8px;top:557.39px;font-size:10px;color:#f2f2f2;-webkit-text-stroke:0.15px #f2f2f2;transform:scaleX(0.826);transform-origin:0 0">13.12.2017</div><div class="a" style="left:3px;top:567px;width:186px;height:1px;background:#8e8e8e"></div><div class="t" style="left:37.5px;width:22px;text-align:right;top:569.70px;font-size:10px;color:#f2f2f2;-webkit-text-stroke:0.15px #f2f2f2;transform:scaleX(0.9);transform-origin:100% 0">130</div><div class="t" style="left:63.8px;top:569.70px;font-size:10px;color:#f2f2f2;-webkit-text-stroke:0.15px #f2f2f2;transform:scaleX(0.874);transform-origin:0 0">53.2</div><div class="a" style="left:93.6px;top:567.60px;width:7.6px;height:12px;overflow:hidden"><div class="t" style="left:0.6px;top:2.1px;font-size:10px;color:#f2f2f2;-webkit-text-stroke:0.15px #f2f2f2;transform:scaleX(0.87);transform-origin:0 0">A</div></div><div class="t" style="left:103.6px;top:569.70px;font-size:10px;color:#f2f2f2;-webkit-text-stroke:0.15px #f2f2f2;transform:scaleX(0.81);transform-origin:0 0">09:51:41</div><div class="t" style="left:144.8px;top:569.70px;font-size:10px;color:#f2f2f2;-webkit-text-stroke:0.15px #f2f2f2;transform:scaleX(0.826);transform-origin:0 0">13.12.2017</div><div class="a" style="left:3px;top:579px;width:186px;height:1px;background:#8e8e8e"></div><div class="t" style="left:37.5px;width:22px;text-align:right;top:582.01px;font-size:10px;color:#f2f2f2;-webkit-text-stroke:0.15px #f2f2f2;transform:scaleX(0.9);transform-origin:100% 0">131</div><div class="t" style="left:63.8px;top:582.01px;font-size:10px;color:#f2f2f2;-webkit-text-stroke:0.15px #f2f2f2;transform:scaleX(0.874);transform-origin:0 0">56.4</div><div class="a" style="left:93.6px;top:579.91px;width:7.6px;height:12px;overflow:hidden"><div class="t" style="left:0.6px;top:2.1px;font-size:10px;color:#f2f2f2;-webkit-text-stroke:0.15px #f2f2f2;transform:scaleX(0.87);transform-origin:0 0">A</div></div><div class="t" style="left:103.6px;top:582.01px;font-size:10px;color:#f2f2f2;-webkit-text-stroke:0.15px #f2f2f2;transform:scaleX(0.81);transform-origin:0 0">09:51:42</div><div class="t" style="left:144.8px;top:582.01px;font-size:10px;color:#f2f2f2;-webkit-text-stroke:0.15px #f2f2f2;transform:scaleX(0.826);transform-origin:0 0">13.12.2017</div><div class="a" style="left:3px;top:591px;width:186px;height:1px;background:#8e8e8e"></div><div class="t" style="left:37.5px;width:22px;text-align:right;top:594.32px;font-size:10px;color:#f2f2f2;-webkit-text-stroke:0.15px #f2f2f2;transform:scaleX(0.9);transform-origin:100% 0">132</div><div class="t" style="left:63.8px;top:594.32px;font-size:10px;color:#f2f2f2;-webkit-text-stroke:0.15px #f2f2f2;transform:scaleX(0.874);transform-origin:0 0">59.0</div><div class="a" style="left:93.6px;top:592.22px;width:7.6px;height:12px;overflow:hidden"><div class="t" style="left:0.6px;top:2.1px;font-size:10px;color:#f2f2f2;-webkit-text-stroke:0.15px #f2f2f2;transform:scaleX(0.87);transform-origin:0 0">A</div></div><div class="t" style="left:103.6px;top:594.32px;font-size:10px;color:#f2f2f2;-webkit-text-stroke:0.15px #f2f2f2;transform:scaleX(0.81);transform-origin:0 0">09:51:43</div><div class="t" style="left:144.8px;top:594.32px;font-size:10px;color:#f2f2f2;-webkit-text-stroke:0.15px #f2f2f2;transform:scaleX(0.826);transform-origin:0 0">13.12.2017</div><div class="a" style="left:3px;top:604px;width:186px;height:1px;background:#8e8e8e"></div><div class="t" style="left:37.5px;width:22px;text-align:right;top:606.63px;font-size:10px;color:#f2f2f2;-webkit-text-stroke:0.15px #f2f2f2;transform:scaleX(0.9);transform-origin:100% 0">133</div><div class="t" style="left:63.8px;top:606.63px;font-size:10px;color:#f2f2f2;-webkit-text-stroke:0.15px #f2f2f2;transform:scaleX(0.874);transform-origin:0 0">65.7</div><div class="a" style="left:93.6px;top:604.53px;width:7.6px;height:12px;overflow:hidden"><div class="t" style="left:0.6px;top:2.1px;font-size:10px;color:#f2f2f2;-webkit-text-stroke:0.15px #f2f2f2;transform:scaleX(0.87);transform-origin:0 0">A</div></div><div class="t" style="left:103.6px;top:606.63px;font-size:10px;color:#f2f2f2;-webkit-text-stroke:0.15px #f2f2f2;transform:scaleX(0.81);transform-origin:0 0">09:51:44</div><div class="t" style="left:144.8px;top:606.63px;font-size:10px;color:#f2f2f2;-webkit-text-stroke:0.15px #f2f2f2;transform:scaleX(0.826);transform-origin:0 0">13.12.2017</div><div class="a" style="left:3px;top:616px;width:186px;height:1px;background:#8e8e8e"></div><div class="t" style="left:37.5px;width:22px;text-align:right;top:618.94px;font-size:10px;color:#f2f2f2;-webkit-text-stroke:0.15px #f2f2f2;transform:scaleX(0.9);transform-origin:100% 0">134</div><div class="t" style="left:63.8px;top:618.94px;font-size:10px;color:#f2f2f2;-webkit-text-stroke:0.15px #f2f2f2;transform:scaleX(0.874);transform-origin:0 0">52.4</div><div class="a" style="left:93.6px;top:616.84px;width:7.6px;height:12px;overflow:hidden"><div class="t" style="left:0.6px;top:2.1px;font-size:10px;color:#f2f2f2;-webkit-text-stroke:0.15px #f2f2f2;transform:scaleX(0.87);transform-origin:0 0">A</div></div><div class="t" style="left:103.6px;top:618.94px;font-size:10px;color:#f2f2f2;-webkit-text-stroke:0.15px #f2f2f2;transform:scaleX(0.81);transform-origin:0 0">09:51:45</div><div class="t" style="left:144.8px;top:618.94px;font-size:10px;color:#f2f2f2;-webkit-text-stroke:0.15px #f2f2f2;transform:scaleX(0.826);transform-origin:0 0">13.12.2017</div><div class="a" style="left:3px;top:628px;width:186px;height:1px;background:#8e8e8e"></div><div class="t" style="left:37.5px;width:22px;text-align:right;top:631.25px;font-size:10px;color:#f2f2f2;-webkit-text-stroke:0.15px #f2f2f2;transform:scaleX(0.9);transform-origin:100% 0">135</div><div class="t" style="left:63.8px;top:631.25px;font-size:10px;color:#f2f2f2;-webkit-text-stroke:0.15px #f2f2f2;transform:scaleX(0.874);transform-origin:0 0">62.1</div><div class="a" style="left:93.6px;top:629.15px;width:7.6px;height:12px;overflow:hidden"><div class="t" style="left:0.6px;top:2.1px;font-size:10px;color:#f2f2f2;-webkit-text-stroke:0.15px #f2f2f2;transform:scaleX(0.87);transform-origin:0 0">A</div></div><div class="t" style="left:103.6px;top:631.25px;font-size:10px;color:#f2f2f2;-webkit-text-stroke:0.15px #f2f2f2;transform:scaleX(0.81);transform-origin:0 0">09:51:46</div><div class="t" style="left:144.8px;top:631.25px;font-size:10px;color:#f2f2f2;-webkit-text-stroke:0.15px #f2f2f2;transform:scaleX(0.826);transform-origin:0 0">13.12.2017</div><div class="a" style="left:3px;top:641px;width:186px;height:1px;background:#8e8e8e"></div><div class="t" style="left:37.5px;width:22px;text-align:right;top:643.56px;font-size:10px;color:#f2f2f2;-webkit-text-stroke:0.15px #f2f2f2;transform:scaleX(0.9);transform-origin:100% 0">136</div><div class="t" style="left:63.8px;top:643.56px;font-size:10px;color:#f2f2f2;-webkit-text-stroke:0.15px #f2f2f2;transform:scaleX(0.874);transform-origin:0 0">42.2</div><div class="a" style="left:93.6px;top:641.46px;width:7.6px;height:12px;overflow:hidden"><div class="t" style="left:0.6px;top:2.1px;font-size:10px;color:#f2f2f2;-webkit-text-stroke:0.15px #f2f2f2;transform:scaleX(0.87);transform-origin:0 0">A</div></div><div class="t" style="left:103.6px;top:643.56px;font-size:10px;color:#f2f2f2;-webkit-text-stroke:0.15px #f2f2f2;transform:scaleX(0.81);transform-origin:0 0">09:51:47</div><div class="t" style="left:144.8px;top:643.56px;font-size:10px;color:#f2f2f2;-webkit-text-stroke:0.15px #f2f2f2;transform:scaleX(0.826);transform-origin:0 0">13.12.2017</div><div class="a" style="left:3px;top:653px;width:186px;height:1px;background:#8e8e8e"></div><div class="t" style="left:37.5px;width:22px;text-align:right;top:655.87px;font-size:10px;color:#f2f2f2;-webkit-text-stroke:0.15px #f2f2f2;transform:scaleX(0.9);transform-origin:100% 0">137</div><div class="t" style="left:63.8px;top:655.87px;font-size:10px;color:#f2f2f2;-webkit-text-stroke:0.15px #f2f2f2;transform:scaleX(0.874);transform-origin:0 0">69.8</div><div class="a" style="left:93.6px;top:653.77px;width:7.6px;height:12px;overflow:hidden"><div class="t" style="left:0.6px;top:2.1px;font-size:10px;color:#f2f2f2;-webkit-text-stroke:0.15px #f2f2f2;transform:scaleX(0.87);transform-origin:0 0">A</div></div><div class="t" style="left:103.6px;top:655.87px;font-size:10px;color:#f2f2f2;-webkit-text-stroke:0.15px #f2f2f2;transform:scaleX(0.81);transform-origin:0 0">09:51:48</div><div class="t" style="left:144.8px;top:655.87px;font-size:10px;color:#f2f2f2;-webkit-text-stroke:0.15px #f2f2f2;transform:scaleX(0.826);transform-origin:0 0">13.12.2017</div><div class="a" style="left:3px;top:665px;width:186px;height:1px;background:#8e8e8e"></div><div class="t" style="left:37.5px;width:22px;text-align:right;top:668.18px;font-size:10px;color:#f2f2f2;-webkit-text-stroke:0.15px #f2f2f2;transform:scaleX(0.9);transform-origin:100% 0">138</div><div class="t" style="left:63.8px;top:668.18px;font-size:10px;color:#f2f2f2;-webkit-text-stroke:0.15px #f2f2f2;transform:scaleX(0.874);transform-origin:0 0">72.1</div><div class="a" style="left:93.6px;top:666.08px;width:7.6px;height:12px;overflow:hidden"><div class="t" style="left:0.6px;top:2.1px;font-size:10px;color:#f2f2f2;-webkit-text-stroke:0.15px #f2f2f2;transform:scaleX(0.87);transform-origin:0 0">A</div></div><div class="t" style="left:103.6px;top:668.18px;font-size:10px;color:#f2f2f2;-webkit-text-stroke:0.15px #f2f2f2;transform:scaleX(0.81);transform-origin:0 0">09:51:49</div><div class="t" style="left:144.8px;top:668.18px;font-size:10px;color:#f2f2f2;-webkit-text-stroke:0.15px #f2f2f2;transform:scaleX(0.826);transform-origin:0 0">13.12.2017</div><div class="a" style="left:3px;top:678px;width:186px;height:1px;background:#8e8e8e"></div><div class="t" style="left:37.5px;width:22px;text-align:right;top:680.49px;font-size:10px;color:#f2f2f2;-webkit-text-stroke:0.15px #f2f2f2;transform:scaleX(0.9);transform-origin:100% 0">139</div><div class="t" style="left:63.8px;top:680.49px;font-size:10px;color:#f2f2f2;-webkit-text-stroke:0.15px #f2f2f2;transform:scaleX(0.874);transform-origin:0 0">61.8</div><div class="a" style="left:93.6px;top:678.39px;width:7.6px;height:12px;overflow:hidden"><div class="t" style="left:0.6px;top:2.1px;font-size:10px;color:#f2f2f2;-webkit-text-stroke:0.15px #f2f2f2;transform:scaleX(0.87);transform-origin:0 0">A</div></div><div class="t" style="left:103.6px;top:680.49px;font-size:10px;color:#f2f2f2;-webkit-text-stroke:0.15px #f2f2f2;transform:scaleX(0.81);transform-origin:0 0">09:51:50</div><div class="t" style="left:144.8px;top:680.49px;font-size:10px;color:#f2f2f2;-webkit-text-stroke:0.15px #f2f2f2;transform:scaleX(0.826);transform-origin:0 0">13.12.2017</div><div class="a" style="left:3px;top:690px;width:186px;height:1px;background:#8e8e8e"></div><div class="t" style="left:37.5px;width:22px;text-align:right;top:692.80px;font-size:10px;color:#f2f2f2;-webkit-text-stroke:0.15px #f2f2f2;transform:scaleX(0.9);transform-origin:100% 0">140</div><div class="t" style="left:63.8px;top:692.80px;font-size:10px;color:#f2f2f2;-webkit-text-stroke:0.15px #f2f2f2;transform:scaleX(0.874);transform-origin:0 0">41.9</div><div class="a" style="left:93.6px;top:690.70px;width:7.6px;height:12px;overflow:hidden"><div class="t" style="left:0.6px;top:2.1px;font-size:10px;color:#f2f2f2;-webkit-text-stroke:0.15px #f2f2f2;transform:scaleX(0.87);transform-origin:0 0">A</div></div><div class="t" style="left:103.6px;top:692.80px;font-size:10px;color:#f2f2f2;-webkit-text-stroke:0.15px #f2f2f2;transform:scaleX(0.81);transform-origin:0 0">09:51:51</div><div class="t" style="left:144.8px;top:692.80px;font-size:10px;color:#f2f2f2;-webkit-text-stroke:0.15px #f2f2f2;transform:scaleX(0.826);transform-origin:0 0">13.12.2017</div><div class="a" style="left:3px;top:702px;width:186px;height:1px;background:#8e8e8e"></div><div class="t" style="left:37.5px;width:22px;text-align:right;top:705.11px;font-size:10px;color:#f2f2f2;-webkit-text-stroke:0.15px #f2f2f2;transform:scaleX(0.9);transform-origin:100% 0">141</div><div class="t" style="left:63.8px;top:705.11px;font-size:10px;color:#f2f2f2;-webkit-text-stroke:0.15px #f2f2f2;transform:scaleX(0.874);transform-origin:0 0">41.7</div><div class="a" style="left:93.6px;top:703.01px;width:7.6px;height:12px;overflow:hidden"><div class="t" style="left:0.6px;top:2.1px;font-size:10px;color:#f2f2f2;-webkit-text-stroke:0.15px #f2f2f2;transform:scaleX(0.87);transform-origin:0 0">A</div></div><div class="t" style="left:103.6px;top:705.11px;font-size:10px;color:#f2f2f2;-webkit-text-stroke:0.15px #f2f2f2;transform:scaleX(0.81);transform-origin:0 0">09:51:52</div><div class="t" style="left:144.8px;top:705.11px;font-size:10px;color:#f2f2f2;-webkit-text-stroke:0.15px #f2f2f2;transform:scaleX(0.826);transform-origin:0 0">13.12.2017</div><div class="a" style="left:3px;top:715px;width:186px;height:1px;background:#8e8e8e"></div><div class="t" style="left:37.5px;width:22px;text-align:right;top:717.42px;font-size:10px;color:#f2f2f2;-webkit-text-stroke:0.15px #f2f2f2;transform:scaleX(0.9);transform-origin:100% 0">142</div><div class="t" style="left:63.8px;top:717.42px;font-size:10px;color:#f2f2f2;-webkit-text-stroke:0.15px #f2f2f2;transform:scaleX(0.874);transform-origin:0 0">40.8</div><div class="a" style="left:93.6px;top:715.32px;width:7.6px;height:12px;overflow:hidden"><div class="t" style="left:0.6px;top:2.1px;font-size:10px;color:#f2f2f2;-webkit-text-stroke:0.15px #f2f2f2;transform:scaleX(0.87);transform-origin:0 0">A</div></div><div class="t" style="left:103.6px;top:717.42px;font-size:10px;color:#f2f2f2;-webkit-text-stroke:0.15px #f2f2f2;transform:scaleX(0.81);transform-origin:0 0">09:51:53</div><div class="t" style="left:144.8px;top:717.42px;font-size:10px;color:#f2f2f2;-webkit-text-stroke:0.15px #f2f2f2;transform:scaleX(0.826);transform-origin:0 0">13.12.2017</div><div class="a" style="left:3px;top:727px;width:186px;height:1px;background:#8e8e8e"></div>
<div class="a" style="left:3px;top:198px;width:186px;height:1px;background:#8e8e8e"></div>
<div class="a" style="left:11px;top:185.5px;width:1px;height:548.5px;background:#8e8e8e"></div>
<div class="a" style="left:61px;top:185.5px;width:1px;height:548.5px;background:#8e8e8e"></div>
<div class="a" style="left:93px;top:185.5px;width:1px;height:548.5px;background:#8e8e8e"></div>
<div class="a" style="left:101px;top:185.5px;width:1px;height:548.5px;background:#8e8e8e"></div>
<div class="a" style="left:142px;top:185.5px;width:1px;height:548.5px;background:#8e8e8e"></div>
<div class="a" style="left:3px;top:185.5px;width:186px;height:1px;background:#ffffff"></div>
<svg class="a" style="left:0;top:0" width="20" height="750"><polygon points="5,717.82 9.5,721.52 5,725.22" fill="#000"/></svg>
<div class="a" style="left:203px;top:69px;width:2px;height:679px;background:#c6c6c6"></div>
<div class="a" style="left:205px;top:69px;width:1px;height:679px;background:#f8f8f8"></div>
<div class="a" style="left:0;top:747px;width:204px;height:1px;background:#a0a0a0"></div>
<div class="a" style="left:0;top:748px;width:205px;height:1px;background:#ffffff"></div>
<div class="a" style="left:7px;top:754.4px;width:80px;height:18.100000000000023px;background:#f0f0f0;border-top:1px solid #ffffff;border-left:1px solid #ffffff;border-right:1px solid #a0a0a0;border-bottom:1px solid #a0a0a0;box-shadow:1px 1px 0 #6a6a6a"></div><div class="t" style="left:25.7px;top:759.03px;font-size:9.8px;color:#000;-webkit-text-stroke:0.2px #000;transform:scaleX(0.821);transform-origin:0 0">Start to Measure</div>
<div class="a" style="left:98px;top:754.4px;width:68px;height:18.100000000000023px;background:#f0f0f0;border-top:1px solid #ffffff;border-left:1px solid #ffffff;border-right:1px solid #a0a0a0;border-bottom:1px solid #a0a0a0;box-shadow:1px 1px 0 #6a6a6a"></div><div class="t" style="left:131.5px;top:759.53px;font-size:9.8px;color:#000;-webkit-text-stroke:0.2px #000;transform:scaleX(0.79);transform-origin:0 0">Clear</div>
<div class="a" style="left:210px;top:69px;width:1px;height:679px;background:#ffffff"></div>
<div class="a" style="left:211px;top:69px;width:1px;height:679px;background:#b4b4b4"></div>
<div class="a" style="left:212px;top:70px;width:1px;height:654px;background:#ffffff"></div>
<div class="a" style="left:212px;top:723px;width:588px;height:1px;background:#c8c8c8"></div>
<div class="a" style="left:211px;top:69px;width:589px;height:1px;background:#c4c4c4"></div>
<div class="a" style="left:212px;top:70px;width:588px;height:1px;background:#fdfdfd"></div>
<svg class="a" style="left:0;top:0" width="800" height="800"><defs><clipPath id="cp"><rect x="212" y="70" width="588" height="653"/></clipPath></defs><g clip-path="url(#cp)"><line x1="264.5" y1="650.21" x2="800" y2="650.21" stroke="#8e8e8e" stroke-width="1" stroke-dasharray="2.5 2.1"/><line x1="264.5" y1="630.12" x2="800" y2="630.12" stroke="#8e8e8e" stroke-width="1" stroke-dasharray="2.5 2.1"/><line x1="264.5" y1="610.03" x2="800" y2="610.03" stroke="#8e8e8e" stroke-width="1" stroke-dasharray="2.5 2.1"/><line x1="264.5" y1="589.94" x2="800" y2="589.94" stroke="#8e8e8e" stroke-width="1" stroke-dasharray="2.5 2.1"/><line x1="264.5" y1="569.85" x2="800" y2="569.85" stroke="#8e8e8e" stroke-width="1" stroke-dasharray="2.5 2.1"/><line x1="264.5" y1="549.76" x2="800" y2="549.76" stroke="#8e8e8e" stroke-width="1" stroke-dasharray="2.5 2.1"/><line x1="264.5" y1="529.67" x2="800" y2="529.67" stroke="#8e8e8e" stroke-width="1" stroke-dasharray="2.5 2.1"/><line x1="264.5" y1="509.58" x2="800" y2="509.58" stroke="#8e8e8e" stroke-width="1" stroke-dasharray="2.5 2.1"/><line x1="264.5" y1="489.49" x2="800" y2="489.49" stroke="#8e8e8e" stroke-width="1" stroke-dasharray="2.5 2.1"/><line x1="264.5" y1="469.40" x2="800" y2="469.40" stroke="#8e8e8e" stroke-width="1" stroke-dasharray="2.5 2.1"/><line x1="264.5" y1="449.31" x2="800" y2="449.31" stroke="#8e8e8e" stroke-width="1" stroke-dasharray="2.5 2.1"/><line x1="264.5" y1="429.22" x2="800" y2="429.22" stroke="#8e8e8e" stroke-width="1" stroke-dasharray="2.5 2.1"/><line x1="264.5" y1="409.13" x2="800" y2="409.13" stroke="#8e8e8e" stroke-width="1" stroke-dasharray="2.5 2.1"/><line x1="264.5" y1="389.04" x2="800" y2="389.04" stroke="#8e8e8e" stroke-width="1" stroke-dasharray="2.5 2.1"/><line x1="264.5" y1="368.95" x2="800" y2="368.95" stroke="#8e8e8e" stroke-width="1" stroke-dasharray="2.5 2.1"/><line x1="264.5" y1="348.86" x2="800" y2="348.86" stroke="#8e8e8e" stroke-width="1" stroke-dasharray="2.5 2.1"/><line x1="264.5" y1="328.77" x2="800" y2="328.77" stroke="#8e8e8e" stroke-width="1" stroke-dasharray="2.5 2.1"/><line x1="264.5" y1="308.68" x2="800" y2="308.68" stroke="#8e8e8e" stroke-width="1" stroke-dasharray="2.5 2.1"/><line x1="264.5" y1="288.59" x2="800" y2="288.59" stroke="#8e8e8e" stroke-width="1" stroke-dasharray="2.5 2.1"/><line x1="264.5" y1="268.50" x2="800" y2="268.50" stroke="#8e8e8e" stroke-width="1" stroke-dasharray="2.5 2.1"/><line x1="264.5" y1="248.41" x2="800" y2="248.41" stroke="#8e8e8e" stroke-width="1" stroke-dasharray="2.5 2.1"/><line x1="264.5" y1="228.32" x2="800" y2="228.32" stroke="#8e8e8e" stroke-width="1" stroke-dasharray="2.5 2.1"/><line x1="264.5" y1="208.23" x2="800" y2="208.23" stroke="#8e8e8e" stroke-width="1" stroke-dasharray="2.5 2.1"/><line x1="264.5" y1="188.14" x2="800" y2="188.14" stroke="#8e8e8e" stroke-width="1" stroke-dasharray="2.5 2.1"/><line x1="264.5" y1="168.05" x2="800" y2="168.05" stroke="#8e8e8e" stroke-width="1" stroke-dasharray="2.5 2.1"/><line x1="264.5" y1="147.96" x2="800" y2="147.96" stroke="#8e8e8e" stroke-width="1" stroke-dasharray="2.5 2.1"/><line x1="264.5" y1="127.87" x2="800" y2="127.87" stroke="#8e8e8e" stroke-width="1" stroke-dasharray="2.5 2.1"/><line x1="264.5" y1="107.78" x2="800" y2="107.78" stroke="#101010" stroke-width="1" stroke-dasharray="2.5 2.1"/><line x1="289.52" y1="107.78" x2="289.52" y2="673.80" stroke="#8e8e8e" stroke-width="1" stroke-dasharray="2.5 2.1"/><line x1="309.54" y1="107.78" x2="309.54" y2="673.80" stroke="#8e8e8e" stroke-width="1" stroke-dasharray="2.5 2.1"/><line x1="329.56" y1="107.78" x2="329.56" y2="673.80" stroke="#8e8e8e" stroke-width="1" stroke-dasharray="2.5 2.1"/><line x1="349.58" y1="107.78" x2="349.58" y2="673.80" stroke="#8e8e8e" stroke-width="1" stroke-dasharray="2.5 2.1"/><line x1="369.60" y1="107.78" x2="369.60" y2="673.80" stroke="#8e8e8e" stroke-width="1" stroke-dasharray="2.5 2.1"/><line x1="389.62" y1="107.78" x2="389.62" y2="673.80" stroke="#8e8e8e" stroke-width="1" stroke-dasharray="2.5 2.1"/><line x1="409.64" y1="107.78" x2="409.64" y2="673.80" stroke="#8e8e8e" stroke-width="1" stroke-dasharray="2.5 2.1"/><line x1="429.66" y1="107.78" x2="429.66" y2="673.80" stroke="#8e8e8e" stroke-width="1" stroke-dasharray="2.5 2.1"/><line x1="449.68" y1="107.78" x2="449.68" y2="673.80" stroke="#8e8e8e" stroke-width="1" stroke-dasharray="2.5 2.1"/><line x1="469.70" y1="107.78" x2="469.70" y2="673.80" stroke="#8e8e8e" stroke-width="1" stroke-dasharray="2.5 2.1"/><line x1="489.72" y1="107.78" x2="489.72" y2="673.80" stroke="#8e8e8e" stroke-width="1" stroke-dasharray="2.5 2.1"/><line x1="509.74" y1="107.78" x2="509.74" y2="673.80" stroke="#8e8e8e" stroke-width="1" stroke-dasharray="2.5 2.1"/><line x1="529.76" y1="107.78" x2="529.76" y2="673.80" stroke="#8e8e8e" stroke-width="1" stroke-dasharray="2.5 2.1"/><line x1="549.78" y1="107.78" x2="549.78" y2="673.80" stroke="#8e8e8e" stroke-width="1" stroke-dasharray="2.5 2.1"/><line x1="569.80" y1="107.78" x2="569.80" y2="673.80" stroke="#8e8e8e" stroke-width="1" stroke-dasharray="2.5 2.1"/><line x1="589.82" y1="107.78" x2="589.82" y2="673.80" stroke="#8e8e8e" stroke-width="1" stroke-dasharray="2.5 2.1"/><line x1="609.84" y1="107.78" x2="609.84" y2="673.80" stroke="#8e8e8e" stroke-width="1" stroke-dasharray="2.5 2.1"/><line x1="629.86" y1="107.78" x2="629.86" y2="673.80" stroke="#8e8e8e" stroke-width="1" stroke-dasharray="2.5 2.1"/><line x1="649.88" y1="107.78" x2="649.88" y2="673.80" stroke="#8e8e8e" stroke-width="1" stroke-dasharray="2.5 2.1"/><line x1="669.90" y1="107.78" x2="669.90" y2="673.80" stroke="#8e8e8e" stroke-width="1" stroke-dasharray="2.5 2.1"/><line x1="689.92" y1="107.78" x2="689.92" y2="673.80" stroke="#8e8e8e" stroke-width="1" stroke-dasharray="2.5 2.1"/><line x1="709.94" y1="107.78" x2="709.94" y2="673.80" stroke="#8e8e8e" stroke-width="1" stroke-dasharray="2.5 2.1"/><line x1="729.96" y1="107.78" x2="729.96" y2="673.80" stroke="#8e8e8e" stroke-width="1" stroke-dasharray="2.5 2.1"/><line x1="749.98" y1="107.78" x2="749.98" y2="673.80" stroke="#8e8e8e" stroke-width="1" stroke-dasharray="2.5 2.1"/><line x1="770.00" y1="107.78" x2="770.00" y2="673.80" stroke="#8e8e8e" stroke-width="1" stroke-dasharray="2.5 2.1"/><line x1="790.02" y1="107.78" x2="790.02" y2="673.80" stroke="#8e8e8e" stroke-width="1" stroke-dasharray="2.5 2.1"/><line x1="810.04" y1="107.78" x2="810.04" y2="673.80" stroke="#8e8e8e" stroke-width="1" stroke-dasharray="2.5 2.1"/><line x1="270" y1="672.30" x2="800" y2="672.30" stroke="#a8a8a8" stroke-width="1" stroke-dasharray="1.2 3.8"/><line x1="269" y1="107.78" x2="269" y2="671.30" stroke="#000" stroke-width="2"/><line x1="268" y1="670.30" x2="800" y2="670.30" stroke="#000" stroke-width="2"/><text x="264" y="672.50" text-anchor="end" font-size="8.4" fill="#202020" stroke="#202020" stroke-width="0.2" font-family="Liberation Sans">0</text><text x="264" y="652.41" text-anchor="end" font-size="8.4" fill="#202020" stroke="#202020" stroke-width="0.2" font-family="Liberation Sans">5</text><text x="264" y="632.32" text-anchor="end" font-size="8.4" fill="#202020" stroke="#202020" stroke-width="0.2" font-family="Liberation Sans">10</text><text x="264" y="612.23" text-anchor="end" font-size="8.4" fill="#202020" stroke="#202020" stroke-width="0.2" font-family="Liberation Sans">15</text><text x="264" y="592.14" text-anchor="end" font-size="8.4" fill="#202020" stroke="#202020" stroke-width="0.2" font-family="Liberation Sans">20</text><text x="264" y="572.05" text-anchor="end" font-size="8.4" fill="#202020" stroke="#202020" stroke-width="0.2" font-family="Liberation Sans">25</text><text x="264" y="551.96" text-anchor="end" font-size="8.4" fill="#202020" stroke="#202020" stroke-width="0.2" font-family="Liberation Sans">30</text><text x="264" y="531.87" text-anchor="end" font-size="8.4" fill="#202020" stroke="#202020" stroke-width="0.2" font-family="Liberation Sans">35</text><text x="264" y="511.78" text-anchor="end" font-size="8.4" fill="#202020" stroke="#202020" stroke-width="0.2" font-family="Liberation Sans">40</text><text x="264" y="491.69" text-anchor="end" font-size="8.4" fill="#202020" stroke="#202020" stroke-width="0.2" font-family="Liberation Sans">45</text><text x="264" y="471.60" text-anchor="end" font-size="8.4" fill="#202020" stroke="#202020" stroke-width="0.2" font-family="Liberation Sans">50</text><text x="264" y="451.51" text-anchor="end" font-size="8.4" fill="#202020" stroke="#202020" stroke-width="0.2" font-family="Liberation Sans">55</text><text x="264" y="431.42" text-anchor="end" font-size="8.4" fill="#202020" stroke="#202020" stroke-width="0.2" font-family="Liberation Sans">60</text><text x="264" y="411.33" text-anchor="end" font-size="8.4" fill="#202020" stroke="#202020" stroke-width="0.2" font-family="Liberation Sans">65</text><text x="264" y="391.24" text-anchor="end" font-size="8.4" fill="#202020" stroke="#202020" stroke-width="0.2" font-family="Liberation Sans">70</text><text x="264" y="371.15" text-anchor="end" font-size="8.4" fill="#202020" stroke="#202020" stroke-width="0.2" font-family="Liberation Sans">75</text><text x="264" y="351.06" text-anchor="end" font-size="8.4" fill="#202020" stroke="#202020" stroke-width="0.2" font-family="Liberation Sans">80</text><text x="264" y="330.97" text-anchor="end" font-size="8.4" fill="#202020" stroke="#202020" stroke-width="0.2" font-family="Liberation Sans">85</text><text x="264" y="310.88" text-anchor="end" font-size="8.4" fill="#202020" stroke="#202020" stroke-width="0.2" font-family="Liberation Sans">90</text><text x="264" y="290.79" text-anchor="end" font-size="8.4" fill="#202020" stroke="#202020" stroke-width="0.2" font-family="Liberation Sans">95</text><text x="264" y="270.70" text-anchor="end" font-size="8.4" fill="#202020" stroke="#202020" stroke-width="0.2" font-family="Liberation Sans">100</text><text x="264" y="250.61" text-anchor="end" font-size="8.4" fill="#202020" stroke="#202020" stroke-width="0.2" font-family="Liberation Sans">105</text><text x="264" y="230.52" text-anchor="end" font-size="8.4" fill="#202020" stroke="#202020" stroke-width="0.2" font-family="Liberation Sans">110</text><text x="264" y="210.43" text-anchor="end" font-size="8.4" fill="#202020" stroke="#202020" stroke-width="0.2" font-family="Liberation Sans">115</text><text x="264" y="190.34" text-anchor="end" font-size="8.4" fill="#202020" stroke="#202020" stroke-width="0.2" font-family="Liberation Sans">120</text><text x="264" y="170.25" text-anchor="end" font-size="8.4" fill="#202020" stroke="#202020" stroke-width="0.2" font-family="Liberation Sans">125</text><text x="264" y="150.16" text-anchor="end" font-size="8.4" fill="#202020" stroke="#202020" stroke-width="0.2" font-family="Liberation Sans">130</text><text x="264" y="130.07" text-anchor="end" font-size="8.4" fill="#202020" stroke="#202020" stroke-width="0.2" font-family="Liberation Sans">135</text><text x="264" y="109.98" text-anchor="end" font-size="8.4" fill="#202020" stroke="#202020" stroke-width="0.2" font-family="Liberation Sans">140</text><text x="268.70" y="684.00" text-anchor="middle" font-size="9" fill="#202020" stroke="#202020" stroke-width="0.2" font-family="Liberation Sans">82</text><text x="288.72" y="684.00" text-anchor="middle" font-size="9" fill="#202020" stroke="#202020" stroke-width="0.2" font-family="Liberation Sans">83</text><text x="308.74" y="684.00" text-anchor="middle" font-size="9" fill="#202020" stroke="#202020" stroke-width="0.2" font-family="Liberation Sans">84</text><text x="328.76" y="684.00" text-anchor="middle" font-size="9" fill="#202020" stroke="#202020" stroke-width="0.2" font-family="Liberation Sans">85</text><text x="348.78" y="684.00" text-anchor="middle" font-size="9" fill="#202020" stroke="#202020" stroke-width="0.2" font-family="Liberation Sans">86</text><text x="368.80" y="684.00" text-anchor="middle" font-size="9" fill="#202020" stroke="#202020" stroke-width="0.2" font-family="Liberation Sans">87</text><text x="388.82" y="684.00" text-anchor="middle" font-size="9" fill="#202020" stroke="#202020" stroke-width="0.2" font-family="Liberation Sans">88</text><text x="408.84" y="684.00" text-anchor="middle" font-size="9" fill="#202020" stroke="#202020" stroke-width="0.2" font-family="Liberation Sans">89</text><text x="428.86" y="684.00" text-anchor="middle" font-size="9" fill="#202020" stroke="#202020" stroke-width="0.2" font-family="Liberation Sans">90</text><text x="448.88" y="684.00" text-anchor="middle" font-size="9" fill="#202020" stroke="#202020" stroke-width="0.2" font-family="Liberation Sans">91</text><text x="468.90" y="684.00" text-anchor="middle" font-size="9" fill="#202020" stroke="#202020" stroke-width="0.2" font-family="Liberation Sans">92</text><text x="488.92" y="684.00" text-anchor="middle" font-size="9" fill="#202020" stroke="#202020" stroke-width="0.2" font-family="Liberation Sans">93</text><text x="508.94" y="684.00" text-anchor="middle" font-size="9" fill="#202020" stroke="#202020" stroke-width="0.2" font-family="Liberation Sans">94</text><text x="528.96" y="684.00" text-anchor="middle" font-size="9" fill="#202020" stroke="#202020" stroke-width="0.2" font-family="Liberation Sans">95</text><text x="548.98" y="684.00" text-anchor="middle" font-size="9" fill="#202020" stroke="#202020" stroke-width="0.2" font-family="Liberation Sans">96</text><text x="569.00" y="684.00" text-anchor="middle" font-size="9" fill="#202020" stroke="#202020" stroke-width="0.2" font-family="Liberation Sans">97</text><text x="589.02" y="684.00" text-anchor="middle" font-size="9" fill="#202020" stroke="#202020" stroke-width="0.2" font-family="Liberation Sans">98</text><text x="609.04" y="684.00" text-anchor="middle" font-size="9" fill="#202020" stroke="#202020" stroke-width="0.2" font-family="Liberation Sans">99</text><text x="630.06" y="684.00" text-anchor="middle" font-size="9" fill="#202020" stroke="#202020" stroke-width="0.2" font-family="Liberation Sans">100</text><text x="650.08" y="684.00" text-anchor="middle" font-size="9" fill="#202020" stroke="#202020" stroke-width="0.2" font-family="Liberation Sans">101</text><text x="670.10" y="684.00" text-anchor="middle" font-size="9" fill="#202020" stroke="#202020" stroke-width="0.2" font-family="Liberation Sans">102</text><text x="690.12" y="684.00" text-anchor="middle" font-size="9" fill="#202020" stroke="#202020" stroke-width="0.2" font-family="Liberation Sans">103</text><text x="710.14" y="684.00" text-anchor="middle" font-size="9" fill="#202020" stroke="#202020" stroke-width="0.2" font-family="Liberation Sans">104</text><text x="730.16" y="684.00" text-anchor="middle" font-size="9" fill="#202020" stroke="#202020" stroke-width="0.2" font-family="Liberation Sans">105</text><text x="750.18" y="684.00" text-anchor="middle" font-size="9" fill="#202020" stroke="#202020" stroke-width="0.2" font-family="Liberation Sans">106</text><text x="770.20" y="684.00" text-anchor="middle" font-size="9" fill="#202020" stroke="#202020" stroke-width="0.2" font-family="Liberation Sans">107</text><text x="790.22" y="684.00" text-anchor="middle" font-size="9" fill="#202020" stroke="#202020" stroke-width="0.2" font-family="Liberation Sans">108</text><text x="810.24" y="684.00" text-anchor="middle" font-size="9" fill="#202020" stroke="#202020" stroke-width="0.2" font-family="Liberation Sans">109</text><polyline points="269.50,398.75 289.52,387.00 309.54,326.25 329.56,385.00 349.58,414.25 369.60,405.50 389.62,448.00 409.64,490.50 429.66,482.50 449.68,448.75 469.70,400.00 489.72,375.50 509.74,372.00 529.76,390.00 549.78,408.50 569.80,448.75 589.82,392.50 609.84,431.25 629.86,376.25 649.88,430.00 669.90,468.75 689.92,489.50 709.94,503.50 729.96,489.50 749.98,468.50 770.00,496.50 790.02,450.00 810.04,407.00" fill="none" stroke="#e04040" stroke-width="1"/><text x="787" y="101" font-size="12.4" fill="#3232c8" font-family="Liberation Sans">SPL Real Time</text></g><text transform="translate(246,414.3) rotate(-90)" font-size="8.7" word-spacing="2" fill="#202020" font-family="Liberation Sans">SPL Unit DB</text><text x="264.5" y="698" font-size="8.6" fill="#3838c8" font-family="Liberation Sans">MAX:</text><text x="296" y="698" font-size="8.6" fill="#3838c8" font-family="Liberation Sans">85,6</text><text x="376" y="698" font-size="8.6" fill="#3838c8" font-family="Liberation Sans">MIN:</text><text x="403.8" y="698" font-size="8.6" fill="#3838c8" font-family="Liberation Sans">39,6</text><text x="484" y="698" font-size="8.6" fill="#3838c8" font-family="Liberation Sans">AVG:</text><text x="516.8" y="698" font-size="8.6" fill="#3838c8" font-family="Liberation Sans">58,3</text><text x="264.5" y="709" font-size="8.6" fill="#3838c8" font-family="Liberation Sans">Date:</text><text x="296" y="709" font-size="8.6" fill="#3838c8" font-family="Liberation Sans">13.12.2017</text></svg>
<div class="a" style="left:212px;top:724px;width:588px;height:1px;background:#ffffff"></div>
<div class="a" style="left:211px;top:747px;width:589px;height:1px;background:#a0a0a0"></div>
<div class="a" style="left:204px;top:748px;width:596px;height:1px;background:#ffffff"></div>
<div class="a" style="left:215.5px;top:727px;width:66.5px;height:18px;background:#f0f0f0;border-top:1px solid #ffffff;border-left:1px solid #ffffff;border-right:1px solid #a0a0a0;border-bottom:1px solid #a0a0a0;box-shadow:1px 1px 0 #6a6a6a"></div><div class="t" style="left:236px;top:731.13px;font-size:9.8px;color:#000;-webkit-text-stroke:0.2px #000;transform:scaleX(0.798);transform-origin:0 0">Print Graph</div>
<div class="a" style="left:292px;top:727px;width:66.69999999999999px;height:18px;background:#f0f0f0;border-top:1px solid #ffffff;border-left:1px solid #ffffff;border-right:1px solid #a0a0a0;border-bottom:1px solid #a0a0a0;box-shadow:1px 1px 0 #6a6a6a"></div><div class="t" style="left:318px;top:731.03px;font-size:9.8px;color:#000;-webkit-text-stroke:0.2px #000;transform:scaleX(0.835);transform-origin:0 0">Zoom In</div>
<div class="a" style="left:369.6px;top:727px;width:66.89999999999998px;height:18px;background:#f0f0f0;border-top:1px solid #ffffff;border-left:1px solid #ffffff;border-right:1px solid #a0a0a0;border-bottom:1px solid #a0a0a0;box-shadow:1px 1px 0 #6a6a6a"></div><div class="t" style="left:392.4px;top:731.23px;font-size:9.8px;color:#000;-webkit-text-stroke:0.2px #000;transform:scaleX(0.84);transform-origin:0 0">Zoom Out</div>
<div class="a" style="left:447px;top:727px;width:66.60000000000002px;height:18px;background:#f0f0f0;border-top:1px solid #ffffff;border-left:1px solid #ffffff;border-right:1px solid #a0a0a0;border-bottom:1px solid #a0a0a0;box-shadow:1px 1px 0 #6a6a6a"></div><div class="t" style="left:459px;top:731.23px;font-size:9.8px;color:#000;-webkit-text-stroke:0.2px #000;transform:scaleX(0.834);transform-origin:0 0">Reset Zoom</div>
<div class="a" style="left:520.5px;top:727px;width:16.5px;height:18px;background:#f0f0f0;border-top:1px solid #ffffff;border-left:1px solid #ffffff;border-right:1px solid #a0a0a0;border-bottom:1px solid #a0a0a0;box-shadow:1px 1px 0 #6a6a6a"></div>
<div class="a" style="left:546px;top:727px;width:18px;height:18px;background:#f0f0f0;border-top:1px solid #ffffff;border-left:1px solid #ffffff;border-right:1px solid #a0a0a0;border-bottom:1px solid #a0a0a0;box-shadow:1px 1px 0 #6a6a6a"></div>
<div class="a" style="left:204.5px;top:756px;width:48.099999999999994px;height:16.5px;background:#f0f0f0;border-top:1px solid #ffffff;border-left:1px solid #ffffff;border-right:1px solid #a0a0a0;border-bottom:1px solid #a0a0a0;box-shadow:1px 1px 0 #6a6a6a"></div><div class="t" style="left:228px;top:759.73px;font-size:9.8px;color:#000;-webkit-text-stroke:0.2px #000;transform:scaleX(0.824);transform-origin:0 0">Save</div>
<div class="a" style="left:258.3px;top:756.7px;width:244.2px;height:15.8px;background:#fff;border-top:1.6px solid #707070;border-left:1.6px solid #707070"></div>
<div class="a" style="left:0;top:778px;width:800px;height:1px;background:#c0c0c0"></div>
<div class="a" style="left:0;top:779px;width:800px;height:1px;background:#fcfcfc"></div>
<div class="a" style="left:0;top:780px;width:800px;height:1px;background:#b4b4b4"></div>
<div class="a" style="left:61.5px;top:780px;width:1px;height:20px;background:#ffffff"></div>
<div class="a" style="left:62.5px;top:780px;width:1px;height:20px;background:#a8a8a8"></div>
<div class="a" style="left:177px;top:780px;width:1px;height:20px;background:#ffffff"></div>
<div class="a" style="left:178px;top:780px;width:1px;height:20px;background:#a8a8a8"></div>
<div class="a" style="left:446.5px;top:780px;width:1px;height:20px;background:#ffffff"></div>
<div class="a" style="left:447.5px;top:780px;width:1px;height:20px;background:#a8a8a8"></div>
<div class="t" style="left:66px;top:785.03px;font-size:9.8px;color:#000;transform:scaleX(0.909);transform-origin:0 0">Connect OK!</div>
<svg class="a" style="left:2px;top:2.2px;overflow:visible" width="12.3" height="12.3" viewBox="0 0 12.3 12.3"><defs><linearGradient id="ag2" x1="0" y1="0" x2="0" y2="1"><stop offset="0" stop-color="#8cc8e8"/><stop offset="1" stop-color="#60c0b8"/></linearGradient></defs><rect x="0" y="0" width="12.3" height="12.3" fill="url(#ag2)"/><rect x="7.626" y="0.6150000000000001" width="3.69" height="3.4440000000000004" fill="#0a2a40"/><polyline points="1.845,6.765000000000001 4.305,5.535 6.15,7.38 7.995000000000001,5.535 9.840000000000002,7.134 12.3,6.15" fill="none" stroke="#e040c0" stroke-width="1.353"/><polyline points="0,3.69 4.920000000000001,8.61 6.765000000000001,11.685" fill="none" stroke="#4a6aa0" stroke-width="0.9840000000000001" opacity="0.7"/></svg>
<svg class="a" style="left:6px;top:19px;overflow:visible" width="11.7" height="11.7" viewBox="0 0 11.7 11.7"><defs><linearGradient id="ag6" x1="0" y1="0" x2="0" y2="1"><stop offset="0" stop-color="#8cc8e8"/><stop offset="1" stop-color="#60c0b8"/></linearGradient></defs><rect x="0" y="0" width="11.7" height="11.7" fill="url(#ag6)"/><rect x="7.254" y="0.585" width="3.51" height="3.2760000000000002" fill="#0a2a40"/><polyline points="1.755,6.4350000000000005 4.095,5.265 5.85,7.02 7.6049999999999995,5.265 9.36,6.785999999999999 11.7,5.85" fill="none" stroke="#e040c0" stroke-width="1.287"/><polyline points="0,3.51 4.68,8.19 6.4350000000000005,11.114999999999998" fill="none" stroke="#4a6aa0" stroke-width="0.9359999999999999" opacity="0.7"/></svg>
<svg class="a" style="left:46px;top:781px;overflow:visible" width="12" height="12" viewBox="0 0 12 12"><defs><linearGradient id="ag46" x1="0" y1="0" x2="0" y2="1"><stop offset="0" stop-color="#8cc8e8"/><stop offset="1" stop-color="#60c0b8"/></linearGradient></defs><rect x="0" y="0" width="12" height="12" fill="url(#ag46)"/><rect x="7.4399999999999995" y="0.6000000000000001" width="3.5999999999999996" height="3.3600000000000003" fill="#0a2a40"/><polyline points="1.7999999999999998,6.6000000000000005 4.199999999999999,5.4 6.0,7.199999999999999 7.800000000000001,5.4 9.600000000000001,6.959999999999999 12,6.0" fill="none" stroke="#e040c0" stroke-width="1.32"/><polyline points="0,3.5999999999999996 4.800000000000001,8.399999999999999 6.6000000000000005,11.399999999999999" fill="none" stroke="#4a6aa0" stroke-width="0.96" opacity="0.7"/></svg>
<svg class="a" style="left:11px;top:39px;overflow:visible" width="25" height="24.5" viewBox="0 0 25 24.5"><rect x="0.5" y="0.5" width="24" height="23.5" rx="1.2" fill="#e4e4e4" stroke="#7a7a7a" stroke-width="1"/><rect x="2.2" y="2.2" width="20.6" height="20" fill="#040c18"/><g stroke-width="0.8"><line x1="2.6" y1="10.4" x2="2.6" y2="14.0" stroke="#2a7ab8"/><line x1="3.6" y1="9.9" x2="3.6" y2="14.5" stroke="#1d5d90"/><line x1="4.6" y1="10.1" x2="4.6" y2="14.3" stroke="#1d5d90"/><line x1="5.6" y1="9.0" x2="5.6" y2="15.4" stroke="#1d5d90"/><line x1="6.6" y1="7.0" x2="6.6" y2="17.4" stroke="#2a7ab8"/><line x1="7.6" y1="9.3" x2="7.6" y2="15.1" stroke="#164a78"/><line x1="8.6" y1="7.5" x2="8.6" y2="16.9" stroke="#2a7ab8"/><line x1="9.6" y1="8.5" x2="9.6" y2="15.9" stroke="#164a78"/><line x1="10.6" y1="8.4" x2="10.6" y2="16.0" stroke="#1d5d90"/><line x1="11.6" y1="3.2" x2="11.6" y2="21.2" stroke="#1d5d90"/><line x1="12.6" y1="4.7" x2="12.6" y2="19.7" stroke="#164a78"/><line x1="13.6" y1="8.2" x2="13.6" y2="16.2" stroke="#2a7ab8"/><line x1="14.6" y1="8.5" x2="14.6" y2="15.9" stroke="#2a7ab8"/><line x1="15.6" y1="7.6" x2="15.6" y2="16.8" stroke="#2a7ab8"/><line x1="16.6" y1="7.0" x2="16.6" y2="17.4" stroke="#3a9ad8"/><line x1="17.6" y1="7.5" x2="17.6" y2="16.9" stroke="#2a7ab8"/><line x1="18.6" y1="9.4" x2="18.6" y2="15.0" stroke="#2a7ab8"/><line x1="19.6" y1="9.0" x2="19.6" y2="15.4" stroke="#1d5d90"/><line x1="20.6" y1="9.1" x2="20.6" y2="15.3" stroke="#2a7ab8"/><line x1="21.6" y1="9.7" x2="21.6" y2="14.7" stroke="#164a78"/><line x1="22.6" y1="9.9" x2="22.6" y2="14.5" stroke="#164a78"/></g><polyline points="2.5,12.5 5,11 7,13.5 9,10.5 11,13.8 13,10.8 15,13.5 17,11 19,13.2 22.5,12" fill="none" stroke="#70d0ff" stroke-width="1.6"/><polyline points="2.5,12.2 22.5,12.2" fill="none" stroke="#b8ecff" stroke-width="0.9"/></svg>
<svg class="a" style="left:41px;top:39px;overflow:visible" width="25" height="24" viewBox="0 0 25 24"><defs><linearGradient id="gdl" x1="0" y1="0" x2="0" y2="1"><stop offset="0" stop-color="#0c7a0c"/><stop offset="0.55" stop-color="#046204"/><stop offset="1" stop-color="#18a018"/></linearGradient></defs><rect x="0.3" y="0.3" width="24.4" height="23.6" rx="5" fill="url(#gdl)" stroke="#3ab83a" stroke-width="0.6"/><polygon points="11,3.5 14,3.5 14,9 19.5,9 12.5,16.8 5.5,9 11,9" fill="#ffffff"/><text x="12.5" y="21.6" font-size="4.6" font-weight="bold" text-anchor="middle" fill="#e8ffe8" font-family="Liberation Sans">PIC</text></svg>
<svg class="a" style="left:68px;top:36px;overflow:visible" width="32" height="30" viewBox="0 0 32 30"><defs><linearGradient id="fld" x1="0" y1="0" x2="1" y2="1"><stop offset="0" stop-color="#fbeaa0"/><stop offset="1" stop-color="#f6dc70"/></linearGradient></defs><path d="M3.2,8 L6,6.5 L12,7 L21,8.5 L21,12 L7.5,27.5 L4.2,27.5 Z" fill="#f2cc60" stroke="#d49a38" stroke-width="0.6"/><path d="M3.6,9 L6.2,8.5 L6.8,27 L4.6,27 Z" fill="#e0a848"/><path d="M5.5,14.5 L20.5,9.5 L27,11.5 L26.5,22.5 L8.5,26.5 L6,27.5 Z" fill="url(#fld)" stroke="#e0c060" stroke-width="0.5"/><path d="M13,5 Q19,1.5 24,6.5 L26.5,5.5 L25.5,15 L18.5,11.5 L21.2,10 Q18.5,6.5 14,6.8 Z" fill="#3cae3c" stroke="#1e8a1e" stroke-width="0.5"/><path d="M21,8.5 L24.5,7.5 L24,12.5 Z" fill="#90e090" opacity="0.6"/></svg>
<svg class="a" style="left:108px;top:36px;overflow:visible" width="30" height="30" viewBox="0 0 30 30"><rect x="2.6" y="2.6" width="24" height="24" rx="4" fill="#e8f8ee"/><path d="M3,6.5 L3,5.5 Q3,3 6,3 L22.5,3 Q26,3 26,6.5 L26,12.5 L24,12.5 L24,6.4 L3,6.4 Z" fill="#1a6a3c"/><path d="M3,22.5 L24,22.5 L24,16.8 L26,16.8 L26,23 Q26,26.2 22.5,26.2 L6,26.2 Q3,26.2 3,23.5 Z" fill="#1a6a3c"/><rect x="5.5" y="5" width="10" height="19" fill="#ffffff"/><g fill="#1f6a40"><rect x="16" y="8.6" width="3.4" height="3.8"/><rect x="20" y="8.6" width="3.4" height="3.8"/><rect x="16" y="16.9" width="3.4" height="3.7"/><rect x="20" y="16.9" width="3.4" height="3.7"/></g><path d="M7.2,10.6 L11.8,19.2 M11.8,10.6 L7.2,19.2" stroke="#1f7042" stroke-width="1.7"/></svg>
<svg class="a" style="left:138px;top:36px;overflow:visible" width="30" height="30" viewBox="0 0 30 30"><defs><linearGradient id="prb" x1="0" y1="0" x2="1" y2="0"><stop offset="0" stop-color="#b8b8b8"/><stop offset="0.2" stop-color="#f4f4f4"/><stop offset="0.8" stop-color="#f4f4f4"/><stop offset="1" stop-color="#b8b8b8"/></linearGradient></defs><rect x="8.9" y="5" width="1.3" height="6" fill="#404040"/><rect x="20.7" y="5" width="1.3" height="6" fill="#404040"/><path d="M3.4,14 Q4,12 6,12 L25,12 Q27,12 27.4,14 L27.4,21.5 L3.4,21.5 Z" fill="url(#prb)"/><rect x="3.4" y="21" width="24" height="0.9" fill="#303030"/><polygon points="7.5,10 23.5,10 26,13.8 4.8,13.8" fill="#2a2a2a"/><rect x="11.5" y="14" width="8" height="1.8" fill="#808080"/><polygon points="7.2,16 23.8,16 22.8,19.5 8.2,19.5" fill="#1a1a1a"/><rect x="9" y="19" width="12.8" height="3.6" fill="#8aa040"/><rect x="9" y="22.4" width="12.8" height="1.4" fill="#e4f0b8"/><rect x="9.2" y="23.8" width="12.4" height="0.9" fill="#404040"/></svg>
<svg class="a" style="left:168px;top:36px;overflow:visible" width="30" height="30" viewBox="0 0 30 30"><defs><linearGradient id="grg" x1="0" y1="0" x2="1" y2="1"><stop offset="0" stop-color="#a8a8a8"/><stop offset="0.5" stop-color="#8c8c8c"/><stop offset="1" stop-color="#a0a0a0"/></linearGradient></defs><polygon points="23.69,12.67 23.89,13.59 26.32,13.69 26.32,16.31 23.89,16.41 23.69,17.33 23.40,18.23 25.46,19.53 24.15,21.80 21.99,20.66 21.36,21.36 20.66,21.99 21.80,24.15 19.53,25.46 18.23,23.40 17.33,23.69 16.41,23.89 16.31,26.32 13.69,26.32 13.59,23.89 12.67,23.69 11.77,23.40 10.47,25.46 8.20,24.15 9.34,21.99 8.64,21.36 8.01,20.66 5.85,21.80 4.54,19.53 6.60,18.23 6.31,17.33 6.11,16.41 3.68,16.31 3.68,13.69 6.11,13.59 6.31,12.67 6.60,11.77 4.54,10.47 5.85,8.20 8.01,9.34 8.64,8.64 9.34,8.01 8.20,5.85 10.47,4.54 11.77,6.60 12.67,6.31 13.59,6.11 13.69,3.68 16.31,3.68 16.41,6.11 17.33,6.31 18.23,6.60 19.53,4.54 21.80,5.85 20.66,8.01 21.36,8.64 21.99,9.34 24.15,8.20 25.46,10.47 23.40,11.77" fill="url(#grg)" stroke="#7a7a7a" stroke-width="0.5"/><circle cx="15" cy="15" r="6.3" fill="#b4b4b4" stroke="#606060" stroke-width="0.8"/><polygon points="18.12,16.80 15.00,18.60 11.88,16.80 11.88,13.20 15.00,11.40 18.12,13.20" fill="#f4f4f4"/></svg>
<svg class="a" style="left:204px;top:36px;overflow:visible" width="30" height="30" viewBox="0 0 30 30"><defs><linearGradient id="ig" x1="0" y1="0" x2="0" y2="1"><stop offset="0" stop-color="#d8f0ff"/><stop offset="0.35" stop-color="#4a9ad8"/><stop offset="0.7" stop-color="#1a5aa8"/><stop offset="1" stop-color="#0c3a80"/></linearGradient></defs><circle cx="15.5" cy="14.5" r="11.6" fill="#e8f0f8" stroke="#8aa8c8" stroke-width="0.6"/><circle cx="15.5" cy="14.5" r="10.4" fill="url(#ig)"/><path d="M15.6,9.6 L18.2,9.2 L16.6,19 L18,19 L17.6,20.8 L13.6,20.8 L14.6,12 L13.8,12 Z" fill="#ffffff"/></svg>
<svg class="a" style="left:248px;top:36px;overflow:visible" width="30" height="30" viewBox="0 0 30 30"><defs><radialGradient id="cg" cx="0.5" cy="0.6" r="0.6"><stop offset="0" stop-color="#f88a30"/><stop offset="0.55" stop-color="#e03a18"/><stop offset="1" stop-color="#b80c0c"/></radialGradient></defs><circle cx="18" cy="15" r="11.4" fill="#f4e4e4"/><circle cx="18" cy="15" r="10.6" fill="#b01010"/><circle cx="18" cy="15" r="9.4" fill="url(#cg)"/><ellipse cx="18" cy="9.5" rx="6" ry="3.5" fill="#ffffff" opacity="0.18"/><path d="M13.6,10.6 L22.4,19.4 M22.4,10.6 L13.6,19.4" stroke="#ffffff" stroke-width="3" stroke-linecap="round"/></svg>
<svg class="a" style="left:9px;top:757.7px;overflow:visible" width="12" height="12" viewBox="0 0 12 12"><circle cx="6" cy="6" r="5.8" fill="#303430"/><circle cx="6" cy="6" r="4.9" fill="#8a948a"/><circle cx="6" cy="6" r="4.9" fill="none" stroke="#2a2a2a" stroke-width="0.9" stroke-dasharray="1 1"/><circle cx="6" cy="6" r="3.1" fill="#005a00"/><circle cx="6" cy="6" r="2.3" fill="#20b020"/><circle cx="5.5" cy="5.3" r="1.1" fill="#70f070"/></svg>
<svg class="a" style="left:115.5px;top:759px;overflow:visible" width="12" height="12" viewBox="0 0 12 12"><ellipse cx="3.2" cy="3.3" rx="2.8" ry="2.3" transform="rotate(35 3.2 3.3)" fill="#0a1830"/><path d="M2.6,5.6 L6.2,2.6 L7.4,4 L3.8,7 Z" fill="#30c8d0"/><path d="M4,7 L7.4,4 Q9.8,5 10,8.5 L8.6,11 Q5.6,10.8 4,7 Z" fill="#f0e870" stroke="#404010" stroke-width="0.5"/><rect x="9.6" y="1" width="1.5" height="10" fill="#a8a030" stroke="#303010" stroke-width="0.4"/><rect x="9.6" y="10.4" width="1.8" height="1.5" fill="#c04010"/><rect x="2.2" y="11" width="4" height="0.9" fill="#b0b0b0"/></svg>
<svg class="a" style="left:220px;top:730px;overflow:visible" width="13" height="13" viewBox="0 0 13 13"><path d="M3,1 L8,1 L11,4 L11,7 L3,7 Z" fill="#e0e0e0" stroke="#303030" stroke-width="1"/><rect x="0.5" y="7" width="12" height="5.5" rx="1" fill="#c8c8c8" stroke="#303030" stroke-width="1"/><rect x="2" y="9" width="9" height="1" fill="#ffffff"/></svg>
<svg class="a" style="left:301.5px;top:729.8px;overflow:visible" width="12" height="12" viewBox="0 0 12 12"><circle cx="5" cy="5" r="3.9" fill="#f4f4f4" stroke="#101010" stroke-width="1.1"/><line x1="7.8" y1="7.8" x2="11.5" y2="11.5" stroke="#101010" stroke-width="1.8"/><line x1="3.4" y1="5" x2="6.6" y2="5" stroke="#e00000" stroke-width="0.9"/><line x1="5" y1="3.4" x2="5" y2="6.6" stroke="#e00000" stroke-width="0.9"/></svg>
<svg class="a" style="left:379.5px;top:729.8px;overflow:visible" width="12" height="12" viewBox="0 0 12 12"><circle cx="5" cy="5" r="3.9" fill="#f4f4f4" stroke="#101010" stroke-width="1.1"/><line x1="7.8" y1="7.8" x2="11.5" y2="11.5" stroke="#101010" stroke-width="1.8"/><line x1="3.4" y1="5" x2="6.6" y2="5" stroke="#e00000" stroke-width="0.9"/></svg>
<svg class="a" style="left:524px;top:733px;overflow:visible" width="12" height="6" viewBox="0 0 12 6"><polygon points="0.5,3 6,0 6,6" fill="#e00000" stroke="#500000" stroke-width="0.6"/><rect x="6" y="2.2" width="6" height="1.8" fill="#400000"/></svg>
<svg class="a" style="left:550px;top:732.5px;overflow:visible" width="12" height="6" viewBox="0 0 12 6"><rect x="0" y="2.2" width="6" height="1.8" fill="#400000"/><polygon points="11.5,3 6,0 6,6" fill="#e00000" stroke="#500000" stroke-width="0.6"/></svg>
<svg class="a" style="left:212px;top:759px;overflow:visible" width="12" height="12" viewBox="0 0 12 12"><rect x="0.5" y="0.5" width="6" height="8" fill="#ffffff" stroke="#202020" stroke-width="0.9"/><path d="M1.5,3 L5,3 M1.5,5 L4,5" stroke="#606060" stroke-width="0.7"/><path d="M6,1 Q9,0 11,3 L12,3 L10,6 L7,4 L8.5,3.5 Q8,2 6,3 Z" fill="#e01010"/><rect x="5" y="6.5" width="7" height="5.5" fill="#101010"/><rect x="6.2" y="6.8" width="4.6" height="1.8" fill="#a0a0ff"/><rect x="7" y="10" width="3" height="1.5" fill="#e0e0e0"/></svg>
<svg class="a" style="left:1.5px;top:781px;overflow:visible" width="12" height="12" viewBox="0 0 12 12"><rect x="1" y="0" width="10" height="7.5" fill="#2080d0" stroke="#304060" stroke-width="0.7"/><rect x="2" y="1" width="8" height="5.5" fill="#60c8f0"/><path d="M0,8 L2,10 L12,10 L11,12 L3,12 Z" fill="#606060"/><rect x="4" y="9.5" width="7" height="2" fill="#c0b090"/></svg>
</div></body></html>
